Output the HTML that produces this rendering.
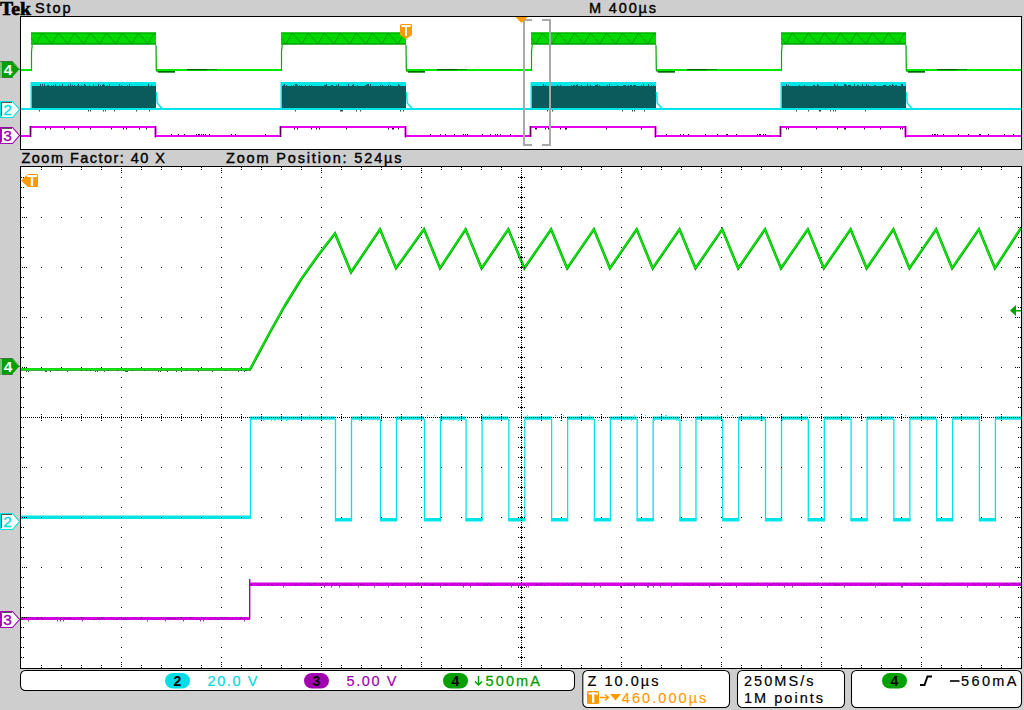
<!DOCTYPE html>
<html><head><meta charset="utf-8"><style>
html,body{margin:0;padding:0;background:#cecece;overflow:hidden;}
svg{display:block;}
</style></head><body>
<svg width="1024" height="710" viewBox="0 0 1024 710">
<rect x="0" y="0" width="1024" height="710" fill="#cecece"/>
<text x="0" y="14.6" font-family='"Liberation Serif", serif' font-size="19" font-weight="bold" fill="#000" stroke="#000" stroke-width="0.6" textLength="31" lengthAdjust="spacingAndGlyphs" >Tek</text>
<text x="35" y="12.8" font-family='"Liberation Sans", sans-serif' font-size="14.5" font-weight="normal" fill="#000" stroke="#000" stroke-width="0.4" textLength="35.5" lengthAdjust="spacing" >Stop</text>
<text x="589" y="12.8" font-family='"Liberation Sans", sans-serif' font-size="14.5" font-weight="normal" fill="#000" stroke="#000" stroke-width="0.4" textLength="67" lengthAdjust="spacing" >M 400µs</text>
<rect x="20" y="16" width="1002" height="134" fill="#000"/>
<rect x="21" y="17" width="1000" height="132" fill="#fff"/>
<rect x="21" y="69" width="10" height="2" fill="#00e800"/>
<rect x="156" y="69" width="125" height="2" fill="#00e800"/>
<rect x="406" y="69" width="125" height="2" fill="#00e800"/>
<rect x="656" y="69" width="125" height="2" fill="#00e800"/>
<rect x="906" y="69" width="115" height="2" fill="#00e800"/>
<rect x="21" y="108" width="1000" height="2" fill="#00e6e6"/>
<rect x="31" y="32.5" width="125" height="12" fill="#00d800"/>
<clipPath id="gc0"><rect x="31" y="32.5" width="125" height="12"/></clipPath>
<path d="M20.0,44 L26.3,33 L36.0,44 L42.3,33 L52.0,44 L58.3,33 L68.0,44 L74.3,33 L84.0,44 L90.3,33 L100.0,44 L106.3,33 L116.0,44 L122.3,33 L132.0,44 L138.3,33 L148.0,44 L154.3,33 L164.0,44 L170.3,33" stroke="#009a00" stroke-width="0.9" fill="none" clip-path="url(#gc0)"/>
<rect x="31" y="32.5" width="125" height="1" fill="#00a000"/>
<rect x="31" y="43.5" width="125" height="1" fill="#008800"/>
<path d="M31.5,71 L31.5,52 L32.2,45" stroke="#00b000" stroke-width="1.2" fill="none"/>
<path d="M156,45 L156.3,70 L157.5,72" stroke="#00a000" stroke-width="1.2" fill="none"/>
<rect x="158" y="71" width="17" height="1.7" fill="#006a00"/>
<rect x="187" y="69" width="20" height="1.2" fill="#005f00"/>
<rect x="207" y="69" width="10" height="1" fill="#009000"/>
<rect x="30.5" y="82" width="125.5" height="28" fill="#00e6e6"/>
<rect x="32" y="86" width="124" height="22" fill="#0a5c5c"/>
<rect x="72" y="85" width="1" height="1" fill="#0a5c5c"/>
<rect x="81" y="85" width="1" height="1" fill="#0a5c5c"/>
<rect x="42" y="84" width="1" height="2" fill="#0a5c5c"/>
<rect x="44" y="84" width="1" height="2" fill="#0a5c5c"/>
<rect x="40" y="84" width="1" height="2" fill="#0a5c5c"/>
<rect x="59" y="85" width="1" height="1" fill="#0a5c5c"/>
<rect x="85" y="85" width="1" height="1" fill="#0a5c5c"/>
<rect x="62" y="84" width="1" height="2" fill="#0a5c5c"/>
<rect x="84" y="84" width="1" height="2" fill="#0a5c5c"/>
<rect x="48" y="85" width="1" height="1" fill="#0a5c5c"/>
<rect x="109" y="84" width="1" height="2" fill="#0a5c5c"/>
<rect x="148" y="84" width="1" height="2" fill="#0a5c5c"/>
<rect x="104" y="85" width="1" height="1" fill="#0a5c5c"/>
<rect x="151" y="85" width="1" height="1" fill="#0a5c5c"/>
<rect x="100" y="85" width="1" height="1" fill="#0a5c5c"/>
<rect x="68" y="85" width="1" height="1" fill="#0a5c5c"/>
<rect x="98" y="84" width="1" height="2" fill="#0a5c5c"/>
<rect x="70" y="84" width="1" height="2" fill="#0a5c5c"/>
<rect x="55" y="84" width="1" height="2" fill="#0a5c5c"/>
<rect x="102" y="85" width="1" height="1" fill="#0a5c5c"/>
<rect x="78" y="84" width="1" height="2" fill="#0a5c5c"/>
<rect x="119" y="84" width="1" height="2" fill="#0a5c5c"/>
<rect x="40" y="85" width="1" height="1" fill="#0a5c5c"/>
<rect x="93" y="84" width="1" height="2" fill="#0a5c5c"/>
<rect x="85" y="85" width="1" height="1" fill="#0a5c5c"/>
<rect x="89" y="85" width="1" height="1" fill="#0a5c5c"/>
<rect x="77" y="85" width="1" height="1" fill="#0a5c5c"/>
<rect x="129" y="84" width="1" height="2" fill="#0a5c5c"/>
<rect x="127" y="85" width="1" height="1" fill="#0a5c5c"/>
<rect x="103" y="84" width="1" height="2" fill="#0a5c5c"/>
<rect x="93" y="85" width="1" height="1" fill="#0a5c5c"/>
<rect x="121" y="85" width="1" height="1" fill="#0a5c5c"/>
<rect x="107" y="85" width="1" height="1" fill="#0a5c5c"/>
<rect x="47" y="85" width="1" height="1" fill="#0a5c5c"/>
<rect x="53" y="85" width="1" height="1" fill="#0a5c5c"/>
<rect x="51" y="85" width="1" height="1" fill="#0a5c5c"/>
<rect x="84" y="84" width="1" height="2" fill="#0a5c5c"/>
<rect x="42" y="84" width="1" height="2" fill="#0a5c5c"/>
<rect x="102" y="85" width="1" height="1" fill="#0a5c5c"/>
<rect x="74" y="85" width="1" height="1" fill="#0a5c5c"/>
<path d="M156.5,92 L157.2,103 L162.5,109" stroke="#00e6e6" stroke-width="1.5" fill="none"/>
<rect x="105" y="110" width="1" height="1.5" fill="#225555"/>
<rect x="103" y="110" width="1" height="1.5" fill="#225555"/>
<rect x="88" y="110" width="1" height="1.5" fill="#225555"/>
<rect x="136" y="110" width="1" height="1.5" fill="#225555"/>
<rect x="149" y="110" width="1" height="1.5" fill="#225555"/>
<rect x="90" y="110" width="1" height="1.5" fill="#225555"/>
<rect x="114" y="110" width="1" height="1.5" fill="#225555"/>
<rect x="39" y="110" width="1" height="1.5" fill="#225555"/>
<rect x="281" y="32.5" width="125" height="12" fill="#00d800"/>
<clipPath id="gc1"><rect x="281" y="32.5" width="125" height="12"/></clipPath>
<path d="M270.0,44 L276.3,33 L286.0,44 L292.3,33 L302.0,44 L308.3,33 L318.0,44 L324.3,33 L334.0,44 L340.3,33 L350.0,44 L356.3,33 L366.0,44 L372.3,33 L382.0,44 L388.3,33 L398.0,44 L404.3,33 L414.0,44 L420.3,33" stroke="#009a00" stroke-width="0.9" fill="none" clip-path="url(#gc1)"/>
<rect x="281" y="32.5" width="125" height="1" fill="#00a000"/>
<rect x="281" y="43.5" width="125" height="1" fill="#008800"/>
<path d="M281.5,71 L281.5,52 L282.2,45" stroke="#00b000" stroke-width="1.2" fill="none"/>
<path d="M406,45 L406.3,70 L407.5,72" stroke="#00a000" stroke-width="1.2" fill="none"/>
<rect x="408" y="71" width="17" height="1.7" fill="#006a00"/>
<rect x="437" y="69" width="20" height="1.2" fill="#005f00"/>
<rect x="457" y="69" width="10" height="1" fill="#009000"/>
<rect x="280.5" y="82" width="125.5" height="28" fill="#00e6e6"/>
<rect x="282" y="86" width="124" height="22" fill="#0a5c5c"/>
<rect x="368" y="84" width="1" height="2" fill="#0a5c5c"/>
<rect x="353" y="84" width="1" height="2" fill="#0a5c5c"/>
<rect x="382" y="85" width="1" height="1" fill="#0a5c5c"/>
<rect x="370" y="84" width="1" height="2" fill="#0a5c5c"/>
<rect x="325" y="85" width="1" height="1" fill="#0a5c5c"/>
<rect x="326" y="84" width="1" height="2" fill="#0a5c5c"/>
<rect x="297" y="85" width="1" height="1" fill="#0a5c5c"/>
<rect x="309" y="85" width="1" height="1" fill="#0a5c5c"/>
<rect x="299" y="85" width="1" height="1" fill="#0a5c5c"/>
<rect x="331" y="85" width="1" height="1" fill="#0a5c5c"/>
<rect x="293" y="85" width="1" height="1" fill="#0a5c5c"/>
<rect x="332" y="85" width="1" height="1" fill="#0a5c5c"/>
<rect x="390" y="85" width="1" height="1" fill="#0a5c5c"/>
<rect x="388" y="85" width="1" height="1" fill="#0a5c5c"/>
<rect x="368" y="85" width="1" height="1" fill="#0a5c5c"/>
<rect x="366" y="85" width="1" height="1" fill="#0a5c5c"/>
<rect x="399" y="85" width="1" height="1" fill="#0a5c5c"/>
<rect x="293" y="85" width="1" height="1" fill="#0a5c5c"/>
<rect x="311" y="85" width="1" height="1" fill="#0a5c5c"/>
<rect x="284" y="84" width="1" height="2" fill="#0a5c5c"/>
<rect x="305" y="85" width="1" height="1" fill="#0a5c5c"/>
<rect x="283" y="85" width="1" height="1" fill="#0a5c5c"/>
<rect x="348" y="84" width="1" height="2" fill="#0a5c5c"/>
<rect x="352" y="85" width="1" height="1" fill="#0a5c5c"/>
<rect x="367" y="84" width="1" height="2" fill="#0a5c5c"/>
<rect x="398" y="84" width="1" height="2" fill="#0a5c5c"/>
<rect x="365" y="85" width="1" height="1" fill="#0a5c5c"/>
<rect x="338" y="84" width="1" height="2" fill="#0a5c5c"/>
<rect x="380" y="85" width="1" height="1" fill="#0a5c5c"/>
<rect x="331" y="85" width="1" height="1" fill="#0a5c5c"/>
<rect x="296" y="84" width="1" height="2" fill="#0a5c5c"/>
<rect x="331" y="85" width="1" height="1" fill="#0a5c5c"/>
<rect x="291" y="85" width="1" height="1" fill="#0a5c5c"/>
<rect x="336" y="85" width="1" height="1" fill="#0a5c5c"/>
<rect x="324" y="85" width="1" height="1" fill="#0a5c5c"/>
<rect x="295" y="84" width="1" height="2" fill="#0a5c5c"/>
<rect x="301" y="85" width="1" height="1" fill="#0a5c5c"/>
<rect x="398" y="84" width="1" height="2" fill="#0a5c5c"/>
<rect x="286" y="85" width="1" height="1" fill="#0a5c5c"/>
<rect x="357" y="85" width="1" height="1" fill="#0a5c5c"/>
<path d="M406.5,92 L407.2,103 L412.5,109" stroke="#00e6e6" stroke-width="1.5" fill="none"/>
<rect x="360" y="110" width="1" height="1.5" fill="#225555"/>
<rect x="400" y="110" width="1" height="1.5" fill="#225555"/>
<rect x="356" y="110" width="1" height="1.5" fill="#225555"/>
<rect x="340" y="110" width="1" height="1.5" fill="#225555"/>
<rect x="295" y="110" width="1" height="1.5" fill="#225555"/>
<rect x="342" y="110" width="1" height="1.5" fill="#225555"/>
<rect x="403" y="110" width="1" height="1.5" fill="#225555"/>
<rect x="341" y="110" width="1" height="1.5" fill="#225555"/>
<rect x="531" y="32.5" width="125" height="12" fill="#00d800"/>
<clipPath id="gc2"><rect x="531" y="32.5" width="125" height="12"/></clipPath>
<path d="M520.0,44 L526.3,33 L536.0,44 L542.3,33 L552.0,44 L558.3,33 L568.0,44 L574.3,33 L584.0,44 L590.3,33 L600.0,44 L606.3,33 L616.0,44 L622.3,33 L632.0,44 L638.3,33 L648.0,44 L654.3,33 L664.0,44 L670.3,33" stroke="#009a00" stroke-width="0.9" fill="none" clip-path="url(#gc2)"/>
<rect x="531" y="32.5" width="125" height="1" fill="#00a000"/>
<rect x="531" y="43.5" width="125" height="1" fill="#008800"/>
<path d="M531.5,71 L531.5,52 L532.2,45" stroke="#00b000" stroke-width="1.2" fill="none"/>
<path d="M656,45 L656.3,70 L657.5,72" stroke="#00a000" stroke-width="1.2" fill="none"/>
<rect x="658" y="71" width="17" height="1.7" fill="#006a00"/>
<rect x="687" y="69" width="20" height="1.2" fill="#005f00"/>
<rect x="707" y="69" width="10" height="1" fill="#009000"/>
<rect x="530.5" y="82" width="125.5" height="28" fill="#00e6e6"/>
<rect x="532" y="86" width="124" height="22" fill="#0a5c5c"/>
<rect x="571" y="85" width="1" height="1" fill="#0a5c5c"/>
<rect x="545" y="85" width="1" height="1" fill="#0a5c5c"/>
<rect x="623" y="85" width="1" height="1" fill="#0a5c5c"/>
<rect x="633" y="85" width="1" height="1" fill="#0a5c5c"/>
<rect x="595" y="85" width="1" height="1" fill="#0a5c5c"/>
<rect x="648" y="84" width="1" height="2" fill="#0a5c5c"/>
<rect x="577" y="84" width="1" height="2" fill="#0a5c5c"/>
<rect x="599" y="85" width="1" height="1" fill="#0a5c5c"/>
<rect x="625" y="85" width="1" height="1" fill="#0a5c5c"/>
<rect x="651" y="85" width="1" height="1" fill="#0a5c5c"/>
<rect x="617" y="85" width="1" height="1" fill="#0a5c5c"/>
<rect x="596" y="85" width="1" height="1" fill="#0a5c5c"/>
<rect x="576" y="85" width="1" height="1" fill="#0a5c5c"/>
<rect x="597" y="84" width="1" height="2" fill="#0a5c5c"/>
<rect x="573" y="85" width="1" height="1" fill="#0a5c5c"/>
<rect x="607" y="85" width="1" height="1" fill="#0a5c5c"/>
<rect x="631" y="85" width="1" height="1" fill="#0a5c5c"/>
<rect x="623" y="85" width="1" height="1" fill="#0a5c5c"/>
<rect x="557" y="85" width="1" height="1" fill="#0a5c5c"/>
<rect x="576" y="85" width="1" height="1" fill="#0a5c5c"/>
<rect x="653" y="85" width="1" height="1" fill="#0a5c5c"/>
<rect x="590" y="85" width="1" height="1" fill="#0a5c5c"/>
<rect x="617" y="85" width="1" height="1" fill="#0a5c5c"/>
<rect x="587" y="84" width="1" height="2" fill="#0a5c5c"/>
<rect x="653" y="85" width="1" height="1" fill="#0a5c5c"/>
<rect x="543" y="85" width="1" height="1" fill="#0a5c5c"/>
<rect x="560" y="85" width="1" height="1" fill="#0a5c5c"/>
<rect x="574" y="85" width="1" height="1" fill="#0a5c5c"/>
<rect x="609" y="84" width="1" height="2" fill="#0a5c5c"/>
<rect x="635" y="85" width="1" height="1" fill="#0a5c5c"/>
<rect x="643" y="85" width="1" height="1" fill="#0a5c5c"/>
<rect x="630" y="85" width="1" height="1" fill="#0a5c5c"/>
<rect x="634" y="85" width="1" height="1" fill="#0a5c5c"/>
<rect x="643" y="84" width="1" height="2" fill="#0a5c5c"/>
<rect x="624" y="85" width="1" height="1" fill="#0a5c5c"/>
<rect x="641" y="85" width="1" height="1" fill="#0a5c5c"/>
<rect x="628" y="85" width="1" height="1" fill="#0a5c5c"/>
<rect x="543" y="84" width="1" height="2" fill="#0a5c5c"/>
<rect x="581" y="85" width="1" height="1" fill="#0a5c5c"/>
<rect x="623" y="85" width="1" height="1" fill="#0a5c5c"/>
<path d="M656.5,92 L657.2,103 L662.5,109" stroke="#00e6e6" stroke-width="1.5" fill="none"/>
<rect x="622" y="110" width="1" height="1.5" fill="#225555"/>
<rect x="552" y="110" width="1" height="1.5" fill="#225555"/>
<rect x="547" y="110" width="1" height="1.5" fill="#225555"/>
<rect x="550" y="110" width="1" height="1.5" fill="#225555"/>
<rect x="644" y="110" width="1" height="1.5" fill="#225555"/>
<rect x="632" y="110" width="1" height="1.5" fill="#225555"/>
<rect x="549" y="110" width="1" height="1.5" fill="#225555"/>
<rect x="634" y="110" width="1" height="1.5" fill="#225555"/>
<rect x="781" y="32.5" width="125" height="12" fill="#00d800"/>
<clipPath id="gc3"><rect x="781" y="32.5" width="125" height="12"/></clipPath>
<path d="M770.0,44 L776.3,33 L786.0,44 L792.3,33 L802.0,44 L808.3,33 L818.0,44 L824.3,33 L834.0,44 L840.3,33 L850.0,44 L856.3,33 L866.0,44 L872.3,33 L882.0,44 L888.3,33 L898.0,44 L904.3,33 L914.0,44 L920.3,33" stroke="#009a00" stroke-width="0.9" fill="none" clip-path="url(#gc3)"/>
<rect x="781" y="32.5" width="125" height="1" fill="#00a000"/>
<rect x="781" y="43.5" width="125" height="1" fill="#008800"/>
<path d="M781.5,71 L781.5,52 L782.2,45" stroke="#00b000" stroke-width="1.2" fill="none"/>
<path d="M906,45 L906.3,70 L907.5,72" stroke="#00a000" stroke-width="1.2" fill="none"/>
<rect x="908" y="71" width="17" height="1.7" fill="#006a00"/>
<rect x="937" y="69" width="20" height="1.2" fill="#005f00"/>
<rect x="957" y="69" width="10" height="1" fill="#009000"/>
<rect x="780.5" y="82" width="125.5" height="28" fill="#00e6e6"/>
<rect x="782" y="86" width="124" height="22" fill="#0a5c5c"/>
<rect x="902" y="84" width="1" height="2" fill="#0a5c5c"/>
<rect x="896" y="85" width="1" height="1" fill="#0a5c5c"/>
<rect x="849" y="85" width="1" height="1" fill="#0a5c5c"/>
<rect x="786" y="84" width="1" height="2" fill="#0a5c5c"/>
<rect x="862" y="84" width="1" height="2" fill="#0a5c5c"/>
<rect x="874" y="85" width="1" height="1" fill="#0a5c5c"/>
<rect x="835" y="85" width="1" height="1" fill="#0a5c5c"/>
<rect x="883" y="85" width="1" height="1" fill="#0a5c5c"/>
<rect x="786" y="85" width="1" height="1" fill="#0a5c5c"/>
<rect x="818" y="85" width="1" height="1" fill="#0a5c5c"/>
<rect x="875" y="85" width="1" height="1" fill="#0a5c5c"/>
<rect x="814" y="85" width="1" height="1" fill="#0a5c5c"/>
<rect x="884" y="85" width="1" height="1" fill="#0a5c5c"/>
<rect x="893" y="85" width="1" height="1" fill="#0a5c5c"/>
<rect x="892" y="84" width="1" height="2" fill="#0a5c5c"/>
<rect x="854" y="84" width="1" height="2" fill="#0a5c5c"/>
<rect x="834" y="84" width="1" height="2" fill="#0a5c5c"/>
<rect x="799" y="85" width="1" height="1" fill="#0a5c5c"/>
<rect x="846" y="85" width="1" height="1" fill="#0a5c5c"/>
<rect x="889" y="85" width="1" height="1" fill="#0a5c5c"/>
<rect x="857" y="85" width="1" height="1" fill="#0a5c5c"/>
<rect x="804" y="85" width="1" height="1" fill="#0a5c5c"/>
<rect x="858" y="85" width="1" height="1" fill="#0a5c5c"/>
<rect x="850" y="85" width="1" height="1" fill="#0a5c5c"/>
<rect x="866" y="84" width="1" height="2" fill="#0a5c5c"/>
<rect x="850" y="85" width="1" height="1" fill="#0a5c5c"/>
<rect x="890" y="85" width="1" height="1" fill="#0a5c5c"/>
<rect x="813" y="85" width="1" height="1" fill="#0a5c5c"/>
<rect x="788" y="85" width="1" height="1" fill="#0a5c5c"/>
<rect x="844" y="84" width="1" height="2" fill="#0a5c5c"/>
<rect x="786" y="85" width="1" height="1" fill="#0a5c5c"/>
<rect x="837" y="84" width="1" height="2" fill="#0a5c5c"/>
<rect x="901" y="84" width="1" height="2" fill="#0a5c5c"/>
<rect x="845" y="84" width="1" height="2" fill="#0a5c5c"/>
<rect x="817" y="84" width="1" height="2" fill="#0a5c5c"/>
<rect x="848" y="85" width="1" height="1" fill="#0a5c5c"/>
<rect x="844" y="85" width="1" height="1" fill="#0a5c5c"/>
<rect x="868" y="85" width="1" height="1" fill="#0a5c5c"/>
<rect x="895" y="85" width="1" height="1" fill="#0a5c5c"/>
<rect x="885" y="85" width="1" height="1" fill="#0a5c5c"/>
<path d="M906.5,92 L907.2,103 L912.5,109" stroke="#00e6e6" stroke-width="1.5" fill="none"/>
<rect x="833" y="110" width="1" height="1.5" fill="#225555"/>
<rect x="830" y="110" width="1" height="1.5" fill="#225555"/>
<rect x="820" y="110" width="1" height="1.5" fill="#225555"/>
<rect x="865" y="110" width="1" height="1.5" fill="#225555"/>
<rect x="835" y="110" width="1" height="1.5" fill="#225555"/>
<rect x="808" y="110" width="1" height="1.5" fill="#225555"/>
<rect x="819" y="110" width="1" height="1.5" fill="#225555"/>
<rect x="796" y="110" width="1" height="1.5" fill="#225555"/>
<path d="M21,136 L30.5,136 L30.5,127 L155.5,127 L155.5,136 L280.5,136 L280.5,127 L405.5,127 L405.5,136 L530.5,136 L530.5,127 L655.5,127 L655.5,136 L780.5,136 L780.5,127 L905.5,127 L905.5,136 L1021,136" stroke="#e600f0" stroke-width="2" fill="none"/>
<path d="M30.5,137 L30.5,126 M155.5,126 L155.5,137.5" stroke="#5a005a" stroke-width="1" fill="none"/>
<rect x="126" y="128" width="1" height="1.5" fill="#500050"/>
<rect x="146" y="128" width="1" height="1.5" fill="#500050"/>
<rect x="111" y="128" width="1" height="1.5" fill="#500050"/>
<rect x="78" y="128" width="1" height="1.5" fill="#500050"/>
<rect x="64" y="128" width="1" height="1.5" fill="#500050"/>
<rect x="50" y="128" width="1" height="1.5" fill="#500050"/>
<rect x="90" y="128" width="1" height="1.5" fill="#500050"/>
<rect x="123" y="128" width="1" height="1.5" fill="#500050"/>
<rect x="45" y="128" width="1" height="1.5" fill="#500050"/>
<rect x="139" y="128" width="1" height="1.5" fill="#500050"/>
<rect x="178" y="134" width="1" height="1.2" fill="#500050"/>
<rect x="231" y="134" width="1" height="1.2" fill="#500050"/>
<rect x="184" y="134" width="1" height="1.2" fill="#500050"/>
<rect x="235" y="134" width="1" height="1.2" fill="#500050"/>
<rect x="265" y="134" width="1" height="1.2" fill="#500050"/>
<rect x="203" y="134" width="1" height="1.2" fill="#500050"/>
<rect x="205" y="134" width="1" height="1.2" fill="#500050"/>
<rect x="198" y="134" width="1" height="1.2" fill="#500050"/>
<rect x="171" y="134" width="1" height="1.2" fill="#500050"/>
<rect x="199" y="134" width="1" height="1.2" fill="#500050"/>
<rect x="196" y="134" width="1" height="1.2" fill="#500050"/>
<rect x="209" y="134" width="1" height="1.2" fill="#500050"/>
<rect x="235" y="134" width="1" height="1.2" fill="#500050"/>
<rect x="201" y="134" width="1" height="1.2" fill="#500050"/>
<path d="M280.5,137 L280.5,126 M405.5,126 L405.5,137.5" stroke="#5a005a" stroke-width="1" fill="none"/>
<rect x="346" y="128" width="1" height="1.5" fill="#500050"/>
<rect x="319" y="128" width="1" height="1.5" fill="#500050"/>
<rect x="398" y="128" width="1" height="1.5" fill="#500050"/>
<rect x="297" y="128" width="1" height="1.5" fill="#500050"/>
<rect x="393" y="128" width="1" height="1.5" fill="#500050"/>
<rect x="311" y="128" width="1" height="1.5" fill="#500050"/>
<rect x="388" y="128" width="1" height="1.5" fill="#500050"/>
<rect x="294" y="128" width="1" height="1.5" fill="#500050"/>
<rect x="316" y="128" width="1" height="1.5" fill="#500050"/>
<rect x="392" y="128" width="1" height="1.5" fill="#500050"/>
<rect x="430" y="134" width="1" height="1.2" fill="#500050"/>
<rect x="490" y="134" width="1" height="1.2" fill="#500050"/>
<rect x="497" y="134" width="1" height="1.2" fill="#500050"/>
<rect x="500" y="134" width="1" height="1.2" fill="#500050"/>
<rect x="482" y="134" width="1" height="1.2" fill="#500050"/>
<rect x="510" y="134" width="1" height="1.2" fill="#500050"/>
<rect x="454" y="134" width="1" height="1.2" fill="#500050"/>
<rect x="467" y="134" width="1" height="1.2" fill="#500050"/>
<rect x="465" y="134" width="1" height="1.2" fill="#500050"/>
<rect x="463" y="134" width="1" height="1.2" fill="#500050"/>
<rect x="445" y="134" width="1" height="1.2" fill="#500050"/>
<rect x="440" y="134" width="1" height="1.2" fill="#500050"/>
<rect x="495" y="134" width="1" height="1.2" fill="#500050"/>
<rect x="430" y="134" width="1" height="1.2" fill="#500050"/>
<path d="M530.5,137 L530.5,126 M655.5,126 L655.5,137.5" stroke="#5a005a" stroke-width="1" fill="none"/>
<rect x="641" y="128" width="1" height="1.5" fill="#500050"/>
<rect x="566" y="128" width="1" height="1.5" fill="#500050"/>
<rect x="536" y="128" width="1" height="1.5" fill="#500050"/>
<rect x="545" y="128" width="1" height="1.5" fill="#500050"/>
<rect x="565" y="128" width="1" height="1.5" fill="#500050"/>
<rect x="606" y="128" width="1" height="1.5" fill="#500050"/>
<rect x="560" y="128" width="1" height="1.5" fill="#500050"/>
<rect x="565" y="128" width="1" height="1.5" fill="#500050"/>
<rect x="548" y="128" width="1" height="1.5" fill="#500050"/>
<rect x="535" y="128" width="1" height="1.5" fill="#500050"/>
<rect x="765" y="134" width="1" height="1.2" fill="#500050"/>
<rect x="705" y="134" width="1" height="1.2" fill="#500050"/>
<rect x="757" y="134" width="1" height="1.2" fill="#500050"/>
<rect x="726" y="134" width="1" height="1.2" fill="#500050"/>
<rect x="666" y="134" width="1" height="1.2" fill="#500050"/>
<rect x="736" y="134" width="1" height="1.2" fill="#500050"/>
<rect x="760" y="134" width="1" height="1.2" fill="#500050"/>
<rect x="763" y="134" width="1" height="1.2" fill="#500050"/>
<rect x="688" y="134" width="1" height="1.2" fill="#500050"/>
<rect x="680" y="134" width="1" height="1.2" fill="#500050"/>
<rect x="759" y="134" width="1" height="1.2" fill="#500050"/>
<rect x="727" y="134" width="1" height="1.2" fill="#500050"/>
<rect x="717" y="134" width="1" height="1.2" fill="#500050"/>
<rect x="683" y="134" width="1" height="1.2" fill="#500050"/>
<path d="M780.5,137 L780.5,126 M905.5,126 L905.5,137.5" stroke="#5a005a" stroke-width="1" fill="none"/>
<rect x="837" y="128" width="1" height="1.5" fill="#500050"/>
<rect x="864" y="128" width="1" height="1.5" fill="#500050"/>
<rect x="816" y="128" width="1" height="1.5" fill="#500050"/>
<rect x="880" y="128" width="1" height="1.5" fill="#500050"/>
<rect x="902" y="128" width="1" height="1.5" fill="#500050"/>
<rect x="788" y="128" width="1" height="1.5" fill="#500050"/>
<rect x="786" y="128" width="1" height="1.5" fill="#500050"/>
<rect x="844" y="128" width="1" height="1.5" fill="#500050"/>
<rect x="900" y="128" width="1" height="1.5" fill="#500050"/>
<rect x="845" y="128" width="1" height="1.5" fill="#500050"/>
<rect x="937" y="134" width="1" height="1.2" fill="#500050"/>
<rect x="958" y="134" width="1" height="1.2" fill="#500050"/>
<rect x="980" y="134" width="1" height="1.2" fill="#500050"/>
<rect x="979" y="134" width="1" height="1.2" fill="#500050"/>
<rect x="980" y="134" width="1" height="1.2" fill="#500050"/>
<rect x="968" y="134" width="1" height="1.2" fill="#500050"/>
<rect x="1004" y="134" width="1" height="1.2" fill="#500050"/>
<rect x="1013" y="134" width="1" height="1.2" fill="#500050"/>
<rect x="943" y="134" width="1" height="1.2" fill="#500050"/>
<rect x="934" y="134" width="1" height="1.2" fill="#500050"/>
<rect x="935" y="134" width="1" height="1.2" fill="#500050"/>
<rect x="932" y="134" width="1" height="1.2" fill="#500050"/>
<rect x="1004" y="134" width="1" height="1.2" fill="#500050"/>
<rect x="988" y="134" width="1" height="1.2" fill="#500050"/>
<path d="M532,20 L524,20 L524,145 L532,145 M542,20 L550,20 L550,145 L542,145" stroke="#a9a9a9" stroke-width="2" fill="none"/>
<polygon points="515.5,17 527.5,17 521.5,23" fill="#ff9900"/>
<path d="M400,25 L401,24 L411,24 L412,25 L412,35 L406,39 L400,35 Z" fill="#ff9900"/>
<rect x="401.5" y="25" width="9" height="2" fill="#fff"/>
<rect x="405" y="25" width="2" height="11" fill="#fff"/>
<polygon points="0.5,61.5 12.5,61.5 19.5,69.5 12.5,77.5 0.5,77.5" fill="#00a000" stroke="#3a7a3a" stroke-width="1"/>
<rect x="0" y="62" width="2" height="16" fill="#7cc47c"/>
<path d="M13,77 L19.3,70" stroke="#ffffff" stroke-width="0.8" fill="none"/>
<path d="M13.2,62.5 L18.5,68.5" stroke="#7fd07f" stroke-width="0.8" fill="none"/>
<text x="8" y="74.5" text-anchor="middle" font-family='"Liberation Sans", sans-serif' font-size="15.5" font-weight="bold" fill="#fff">4</text>
<polygon points="0.5,101.5 12.5,101.5 19.5,109.5 12.5,117.5 0.5,117.5" fill="#fff" stroke="#00dede" stroke-width="1.1"/>
<path d="M1.5,116 L1.5,102.5 L12,102.5" stroke="#404040" stroke-width="0.9" fill="none"/>
<text x="7.5" y="114.5" text-anchor="middle" font-family='"Liberation Sans", sans-serif' font-size="15.5" fill="#00dede" stroke="#00dede" stroke-width="0.35">2</text>
<polygon points="0.5,127.5 12.5,127.5 19.5,135.5 12.5,143.5 0.5,143.5" fill="#fff" stroke="#a000b0" stroke-width="1.1"/>
<path d="M1.5,142 L1.5,128.5 L12,128.5" stroke="#404040" stroke-width="0.9" fill="none"/>
<text x="7.5" y="140.5" text-anchor="middle" font-family='"Liberation Sans", sans-serif' font-size="15.5" fill="#a000b0" stroke="#a000b0" stroke-width="0.35">3</text>
<text x="21.5" y="162.6" font-family='"Liberation Sans", sans-serif' font-size="14.5" font-weight="normal" fill="#000" stroke="#000" stroke-width="0.4" textLength="143.5" lengthAdjust="spacing" >Zoom Factor: 40 X</text>
<text x="226" y="162.6" font-family='"Liberation Sans", sans-serif' font-size="14.5" font-weight="normal" fill="#000" stroke="#000" stroke-width="0.4" textLength="175.5" lengthAdjust="spacing" >Zoom Position: 524µs</text>
<rect x="20" y="166" width="1002" height="503" fill="#000"/>
<rect x="21" y="167" width="1000" height="501" fill="#fff"/>
<clipPath id="mc"><rect x="21" y="167" width="1000" height="501"/></clipPath>
<g clip-path="url(#mc)">
<path d="M21.0,369.5 L250.0,369.5 L260.0,350.8 L269.3,333.5 L285.0,305.5 L301.0,279.5 L318.0,255.5 L335.0,233.5 L351.0,272.3 L380.0,229.3 L396.0,268.3 L424.0,229.3 L440.0,268.3 L465.6,229.3 L481.6,268.3 L508.3,229.3 L524.3,268.3 L551.1,229.3 L567.1,268.3 L593.9,229.3 L609.9,268.3 L636.7,229.3 L652.7,268.3 L679.5,229.3 L695.5,268.3 L722.2,229.3 L738.2,268.3 L765.0,229.3 L781.0,268.3 L807.8,229.3 L823.8,268.3 L850.6,229.3 L866.6,268.3 L893.4,229.3 L909.4,268.3 L936.1,229.3 L952.1,268.3 L978.9,229.3 L994.9,268.3 L1021.0,228.0" stroke="#009000" stroke-width="2.5" fill="none" stroke-linejoin="miter"/>
<path d="M21.0,369.5 L250.0,369.5 L260.0,350.8 L269.3,333.5 L285.0,305.5 L301.0,279.5 L318.0,255.5 L335.0,233.5 L351.0,272.3 L380.0,229.3 L396.0,268.3 L424.0,229.3 L440.0,268.3 L465.6,229.3 L481.6,268.3 L508.3,229.3 L524.3,268.3 L551.1,229.3 L567.1,268.3 L593.9,229.3 L609.9,268.3 L636.7,229.3 L652.7,268.3 L679.5,229.3 L695.5,268.3 L722.2,229.3 L738.2,268.3 L765.0,229.3 L781.0,268.3 L807.8,229.3 L823.8,268.3 L850.6,229.3 L866.6,268.3 L893.4,229.3 L909.4,268.3 L936.1,229.3 L952.1,268.3 L978.9,229.3 L994.9,268.3 L1021.0,228.0" stroke="#00f000" stroke-width="1.5" fill="none" stroke-linejoin="miter" transform="translate(-0.2,-0.2)"/>
<rect x="21" y="515.5" width="229.5" height="3.5" fill="#00e4e6"/>
<rect x="250" y="416.5" width="85" height="3.2" fill="#00e4e6"/>
<rect x="335" y="518" width="17" height="3.5" fill="#00e4e6"/>
<rect x="351" y="416.5" width="29" height="3.2" fill="#00e4e6"/>
<rect x="380" y="518" width="17" height="3.5" fill="#00e4e6"/>
<rect x="396" y="416.5" width="28" height="3.2" fill="#00e4e6"/>
<rect x="424" y="518" width="17" height="3.5" fill="#00e4e6"/>
<rect x="440" y="416.5" width="25.560000000000002" height="3.2" fill="#00e4e6"/>
<rect x="465.56" y="518" width="17.0" height="3.5" fill="#00e4e6"/>
<rect x="481.56" y="416.5" width="26.78000000000003" height="3.2" fill="#00e4e6"/>
<rect x="508.34000000000003" y="518" width="17.0" height="3.5" fill="#00e4e6"/>
<rect x="524.34" y="416.5" width="26.779999999999973" height="3.2" fill="#00e4e6"/>
<rect x="551.12" y="518" width="17.0" height="3.5" fill="#00e4e6"/>
<rect x="567.12" y="416.5" width="26.779999999999973" height="3.2" fill="#00e4e6"/>
<rect x="593.9" y="518" width="17.0" height="3.5" fill="#00e4e6"/>
<rect x="609.9" y="416.5" width="26.780000000000086" height="3.2" fill="#00e4e6"/>
<rect x="636.6800000000001" y="518" width="17.0" height="3.5" fill="#00e4e6"/>
<rect x="652.6800000000001" y="416.5" width="26.779999999999973" height="3.2" fill="#00e4e6"/>
<rect x="679.46" y="518" width="17.0" height="3.5" fill="#00e4e6"/>
<rect x="695.46" y="416.5" width="26.779999999999973" height="3.2" fill="#00e4e6"/>
<rect x="722.24" y="518" width="17.0" height="3.5" fill="#00e4e6"/>
<rect x="738.24" y="416.5" width="26.779999999999973" height="3.2" fill="#00e4e6"/>
<rect x="765.02" y="518" width="17.0" height="3.5" fill="#00e4e6"/>
<rect x="781.02" y="416.5" width="26.779999999999973" height="3.2" fill="#00e4e6"/>
<rect x="807.8" y="518" width="17.0" height="3.5" fill="#00e4e6"/>
<rect x="823.8" y="416.5" width="26.780000000000086" height="3.2" fill="#00e4e6"/>
<rect x="850.58" y="518" width="17.0" height="3.5" fill="#00e4e6"/>
<rect x="866.58" y="416.5" width="26.779999999999973" height="3.2" fill="#00e4e6"/>
<rect x="893.36" y="518" width="17.0" height="3.5" fill="#00e4e6"/>
<rect x="909.36" y="416.5" width="26.779999999999973" height="3.2" fill="#00e4e6"/>
<rect x="936.14" y="518" width="17.0" height="3.5" fill="#00e4e6"/>
<rect x="952.14" y="416.5" width="26.780000000000086" height="3.2" fill="#00e4e6"/>
<rect x="978.9200000000001" y="518" width="17.0" height="3.5" fill="#00e4e6"/>
<rect x="994.9200000000001" y="416.5" width="26.079999999999927" height="3.2" fill="#00e4e6"/>
<path d="M250.5,519 L250.5,417 M335.5,419 L335.5,521 M351.5,521 L351.5,419 M380.5,419 L380.5,521 M396.5,521 L396.5,419 M424.5,419 L424.5,521 M440.5,521 L440.5,419 M466.06,419 L466.06,521 M482.06,521 L482.06,419 M508.84000000000003,419 L508.84000000000003,521 M524.84,521 L524.84,419 M551.62,419 L551.62,521 M567.62,521 L567.62,419 M594.4,419 L594.4,521 M610.4,521 L610.4,419 M637.1800000000001,419 L637.1800000000001,521 M653.1800000000001,521 L653.1800000000001,419 M679.96,419 L679.96,521 M695.96,521 L695.96,419 M722.74,419 L722.74,521 M738.74,521 L738.74,419 M765.52,419 L765.52,521 M781.52,521 L781.52,419 M808.3,419 L808.3,521 M824.3,521 L824.3,419 M851.08,419 L851.08,521 M867.08,521 L867.08,419 M893.86,419 L893.86,521 M909.86,521 L909.86,419 M936.64,419 L936.64,521 M952.64,521 L952.64,419 M979.4200000000001,419 L979.4200000000001,521 M995.4200000000001,521 L995.4200000000001,419" stroke="#00e4e6" stroke-width="1.3" fill="none"/>
<path d="M26,371h1v1h-1zM28,371h1v1h-1zM45,371h1v1h-1zM46,371h1v1h-1zM50,371h1v1h-1zM57,370h1v1h-1zM67,371h1v1h-1zM81,370h1v1h-1zM86,370h1v1h-1zM90,370h1v1h-1zM95,371h1v1h-1zM97,371h1v1h-1zM104,371h1v1h-1zM108,370h1v1h-1zM117,370h1v1h-1zM123,370h1v1h-1zM125,371h1v1h-1zM126,371h1v1h-1zM127,371h1v1h-1zM132,370h1v1h-1zM144,370h1v1h-1zM158,371h1v1h-1zM160,371h1v1h-1zM166,370h1v1h-1zM167,371h1v1h-1zM176,371h1v1h-1zM181,371h1v1h-1zM186,370h1v1h-1zM197,370h1v1h-1zM198,371h1v1h-1zM212,371h1v1h-1zM225,370h1v1h-1zM238,371h1v1h-1zM241,370h1v1h-1zM244,371h1v1h-1zM245,370h1v1h-1zM246,370h1v1h-1z" fill="#007a00"/>
<path d="M263,420h1v1h-1zM271,420h1v1h-1zM274,420h1v1h-1zM286,420h1v1h-1zM309,415h1v1h-1zM359,420h1v1h-1zM377,420h1v1h-1zM390,420h1v1h-1zM427,415h1v1h-1zM432,420h1v1h-1zM434,415h1v1h-1zM453,420h1v1h-1zM458,420h1v1h-1zM482,415h1v1h-1zM489,415h1v1h-1zM509,420h1v1h-1zM521,415h1v1h-1zM527,415h1v1h-1zM541,420h1v1h-1zM555,415h1v1h-1zM560,420h1v1h-1zM563,415h1v1h-1zM589,415h1v1h-1zM598,420h1v1h-1zM631,420h1v1h-1zM634,415h1v1h-1zM645,415h1v1h-1zM654,420h1v1h-1zM661,415h1v1h-1zM665,415h1v1h-1zM666,415h1v1h-1zM676,420h1v1h-1zM678,420h1v1h-1zM686,420h1v1h-1zM691,420h1v1h-1zM717,415h1v1h-1zM727,415h1v1h-1zM732,415h1v1h-1zM750,415h1v1h-1zM760,420h1v1h-1zM762,420h1v1h-1zM770,415h1v1h-1zM779,415h1v1h-1zM782,420h1v1h-1zM809,415h1v1h-1zM821,420h1v1h-1zM862,420h1v1h-1zM905,415h1v1h-1zM927,420h1v1h-1z" fill="#00e4e6" opacity="0.8"/>
<rect x="21" y="617" width="229" height="3" fill="#d600e6"/>
<rect x="250" y="582.5" width="771" height="3.5" fill="#d600e6"/>
<path d="M22,619h1v1h-1zM23,618h1v1h-1zM27,619h1v1h-1zM28,620h1v1.5h-1zM29,619h1v1h-1zM30,617h1v1h-1zM32,619h1v1h-1zM33,617h1v1h-1zM36,618h1v1h-1zM37,617h1v1h-1zM38,618h1v1h-1zM42,618h1v1h-1zM43,619h1v1h-1zM47,617h1v1h-1zM56,617h1v1h-1zM57,619h1v1h-1zM57,620h1v1.5h-1zM59,619h1v1h-1zM60,618h1v1h-1zM60,620h1v1.5h-1zM61,619h1v1h-1zM63,620h1v1.5h-1zM64,618h1v1h-1zM66,618h1v1h-1zM68,618h1v1h-1zM69,618h1v1h-1zM70,617h1v1h-1zM71,619h1v1h-1zM74,619h1v1h-1zM78,617h1v1h-1zM82,617h1v1h-1zM82,620h1v1.5h-1zM84,618h1v1h-1zM87,619h1v1h-1zM93,619h1v1h-1zM94,619h1v1h-1zM96,619h1v1h-1zM97,617h1v1h-1zM98,618h1v1h-1zM99,618h1v1h-1zM102,618h1v1h-1zM103,617h1v1h-1zM104,619h1v1h-1zM111,617h1v1h-1zM113,617h1v1h-1zM116,619h1v1h-1zM117,619h1v1h-1zM119,617h1v1h-1zM123,618h1v1h-1zM124,619h1v1h-1zM125,618h1v1h-1zM126,619h1v1h-1zM127,617h1v1h-1zM133,617h1v1h-1zM135,617h1v1h-1zM138,619h1v1h-1zM140,618h1v1h-1zM145,617h1v1h-1zM147,620h1v1.5h-1zM151,618h1v1h-1zM153,619h1v1h-1zM165,620h1v1.5h-1zM166,618h1v1h-1zM167,617h1v1h-1zM168,617h1v1h-1zM169,618h1v1h-1zM170,617h1v1h-1zM172,618h1v1h-1zM173,618h1v1h-1zM175,619h1v1h-1zM177,618h1v1h-1zM178,617h1v1h-1zM180,617h1v1h-1zM181,617h1v1h-1zM183,620h1v1.5h-1zM185,617h1v1h-1zM189,617h1v1h-1zM190,617h1v1h-1zM191,617h1v1h-1zM193,617h1v1h-1zM196,619h1v1h-1zM199,619h1v1h-1zM200,620h1v1.5h-1zM203,618h1v1h-1zM203,620h1v1.5h-1zM207,618h1v1h-1zM209,619h1v1h-1zM211,617h1v1h-1zM214,617h1v1h-1zM215,617h1v1h-1zM217,619h1v1h-1zM218,619h1v1h-1zM221,617h1v1h-1zM222,618h1v1h-1zM224,617h1v1h-1zM225,617h1v1h-1zM227,617h1v1h-1zM232,618h1v1h-1zM236,617h1v1h-1zM240,618h1v1h-1zM244,617h1v1h-1zM244,620h1v1.5h-1zM251,584h1v1h-1zM255,583h1v1h-1zM259,585h1v1h-1zM261,584h1v1h-1zM264,584h1v1h-1zM267,584h1v1h-1zM268,584h1v1h-1zM271,584h1v1h-1zM272,585h1v1h-1zM277,584h1v1h-1zM283,583h1v1h-1zM283,586h1v1.5h-1zM295,584h1v1h-1zM297,584h1v1h-1zM301,583h1v1h-1zM307,584h1v1h-1zM308,583h1v1h-1zM309,584h1v1h-1zM311,584h1v1h-1zM314,583h1v1h-1zM315,583h1v1h-1zM320,584h1v1h-1zM321,584h1v1h-1zM322,583h1v1h-1zM324,585h1v1h-1zM324,586h1v1.5h-1zM325,583h1v1h-1zM327,583h1v1h-1zM329,584h1v1h-1zM331,583h1v1h-1zM331,586h1v1.5h-1zM332,585h1v1h-1zM334,583h1v1h-1zM336,584h1v1h-1zM337,583h1v1h-1zM339,585h1v1h-1zM339,586h1v1.5h-1zM340,585h1v1h-1zM343,584h1v1h-1zM345,584h1v1h-1zM347,585h1v1h-1zM350,584h1v1h-1zM351,585h1v1h-1zM356,584h1v1h-1zM358,585h1v1h-1zM358,586h1v1.5h-1zM360,584h1v1h-1zM361,584h1v1h-1zM363,584h1v1h-1zM367,585h1v1h-1zM372,583h1v1h-1zM373,584h1v1h-1zM374,586h1v1.5h-1zM376,583h1v1h-1zM378,583h1v1h-1zM382,585h1v1h-1zM386,583h1v1h-1zM388,586h1v1.5h-1zM392,584h1v1h-1zM394,583h1v1h-1zM396,583h1v1h-1zM402,584h1v1h-1zM405,586h1v1.5h-1zM406,584h1v1h-1zM407,585h1v1h-1zM411,585h1v1h-1zM415,584h1v1h-1zM416,584h1v1h-1zM417,583h1v1h-1zM418,583h1v1h-1zM419,584h1v1h-1zM421,586h1v1.5h-1zM424,584h1v1h-1zM425,583h1v1h-1zM430,584h1v1h-1zM431,584h1v1h-1zM432,584h1v1h-1zM433,584h1v1h-1zM438,584h1v1h-1zM440,584h1v1h-1zM440,586h1v1.5h-1zM444,584h1v1h-1zM445,585h1v1h-1zM446,584h1v1h-1zM452,584h1v1h-1zM454,583h1v1h-1zM457,584h1v1h-1zM459,583h1v1h-1zM460,584h1v1h-1zM462,585h1v1h-1zM463,584h1v1h-1zM463,586h1v1.5h-1zM466,583h1v1h-1zM470,584h1v1h-1zM470,586h1v1.5h-1zM477,583h1v1h-1zM478,584h1v1h-1zM483,585h1v1h-1zM484,584h1v1h-1zM486,585h1v1h-1zM487,584h1v1h-1zM488,583h1v1h-1zM490,584h1v1h-1zM491,585h1v1h-1zM494,585h1v1h-1zM505,584h1v1h-1zM506,584h1v1h-1zM510,584h1v1h-1zM511,586h1v1.5h-1zM512,584h1v1h-1zM517,584h1v1h-1zM518,585h1v1h-1zM518,586h1v1.5h-1zM521,584h1v1h-1zM524,584h1v1h-1zM526,586h1v1.5h-1zM527,584h1v1h-1zM528,586h1v1.5h-1zM536,584h1v1h-1zM537,584h1v1h-1zM540,584h1v1h-1zM541,583h1v1h-1zM544,585h1v1h-1zM548,583h1v1h-1zM551,584h1v1h-1zM553,584h1v1h-1zM557,584h1v1h-1zM561,585h1v1h-1zM564,584h1v1h-1zM567,583h1v1h-1zM568,584h1v1h-1zM571,585h1v1h-1zM572,584h1v1h-1zM574,583h1v1h-1zM581,584h1v1h-1zM581,586h1v1.5h-1zM582,583h1v1h-1zM584,583h1v1h-1zM586,583h1v1h-1zM591,584h1v1h-1zM594,583h1v1h-1zM594,586h1v1.5h-1zM595,583h1v1h-1zM598,584h1v1h-1zM600,586h1v1.5h-1zM605,585h1v1h-1zM607,584h1v1h-1zM620,586h1v1.5h-1zM621,586h1v1.5h-1zM624,585h1v1h-1zM627,584h1v1h-1zM628,584h1v1h-1zM630,585h1v1h-1zM633,584h1v1h-1zM634,584h1v1h-1zM634,586h1v1.5h-1zM636,585h1v1h-1zM637,584h1v1h-1zM644,584h1v1h-1zM645,585h1v1h-1zM646,585h1v1h-1zM647,586h1v1.5h-1zM648,583h1v1h-1zM648,586h1v1.5h-1zM651,584h1v1h-1zM652,585h1v1h-1zM653,586h1v1.5h-1zM654,584h1v1h-1zM660,584h1v1h-1zM660,586h1v1.5h-1zM661,583h1v1h-1zM662,584h1v1h-1zM663,583h1v1h-1zM671,586h1v1.5h-1zM673,585h1v1h-1zM675,583h1v1h-1zM676,584h1v1h-1zM684,584h1v1h-1zM687,584h1v1h-1zM689,585h1v1h-1zM692,584h1v1h-1zM693,584h1v1h-1zM697,584h1v1h-1zM699,584h1v1h-1zM703,585h1v1h-1zM706,584h1v1h-1zM709,586h1v1.5h-1zM710,584h1v1h-1zM711,584h1v1h-1zM712,584h1v1h-1zM713,585h1v1h-1zM714,585h1v1h-1zM715,584h1v1h-1zM717,584h1v1h-1zM719,584h1v1h-1zM721,584h1v1h-1zM722,583h1v1h-1zM726,585h1v1h-1zM729,585h1v1h-1zM735,584h1v1h-1zM736,586h1v1.5h-1zM738,585h1v1h-1zM744,584h1v1h-1zM747,585h1v1h-1zM750,584h1v1h-1zM753,584h1v1h-1zM757,583h1v1h-1zM758,583h1v1h-1zM760,585h1v1h-1zM766,583h1v1h-1zM767,586h1v1.5h-1zM769,584h1v1h-1zM771,584h1v1h-1zM773,583h1v1h-1zM774,583h1v1h-1zM777,583h1v1h-1zM778,584h1v1h-1zM779,584h1v1h-1zM782,584h1v1h-1zM784,586h1v1.5h-1zM786,583h1v1h-1zM787,584h1v1h-1zM792,584h1v1h-1zM792,586h1v1.5h-1zM795,584h1v1h-1zM797,584h1v1h-1zM801,584h1v1h-1zM803,585h1v1h-1zM804,584h1v1h-1zM806,585h1v1h-1zM809,583h1v1h-1zM814,583h1v1h-1zM816,583h1v1h-1zM817,584h1v1h-1zM823,584h1v1h-1zM825,583h1v1h-1zM828,584h1v1h-1zM829,583h1v1h-1zM833,583h1v1h-1zM834,584h1v1h-1zM835,584h1v1h-1zM836,585h1v1h-1zM837,584h1v1h-1zM839,584h1v1h-1zM842,584h1v1h-1zM844,585h1v1h-1zM844,586h1v1.5h-1zM846,583h1v1h-1zM850,585h1v1h-1zM861,584h1v1h-1zM865,585h1v1h-1zM868,584h1v1h-1zM870,584h1v1h-1zM871,583h1v1h-1zM873,584h1v1h-1zM874,584h1v1h-1zM875,586h1v1.5h-1zM876,584h1v1h-1zM879,583h1v1h-1zM881,584h1v1h-1zM882,585h1v1h-1zM883,584h1v1h-1zM885,584h1v1h-1zM886,584h1v1h-1zM892,584h1v1h-1zM898,583h1v1h-1zM901,586h1v1.5h-1zM902,584h1v1h-1zM902,586h1v1.5h-1zM904,583h1v1h-1zM905,584h1v1h-1zM906,583h1v1h-1zM911,584h1v1h-1zM914,583h1v1h-1zM916,583h1v1h-1zM919,585h1v1h-1zM920,585h1v1h-1zM922,585h1v1h-1zM923,585h1v1h-1zM926,585h1v1h-1zM928,585h1v1h-1zM930,583h1v1h-1zM934,584h1v1h-1zM939,583h1v1h-1zM943,584h1v1h-1zM944,585h1v1h-1zM946,583h1v1h-1zM947,583h1v1h-1zM950,584h1v1h-1zM958,584h1v1h-1zM962,583h1v1h-1zM967,586h1v1.5h-1zM973,583h1v1h-1zM974,584h1v1h-1zM975,584h1v1h-1zM978,583h1v1h-1zM984,584h1v1h-1zM985,584h1v1h-1zM986,586h1v1.5h-1zM989,584h1v1h-1zM992,584h1v1h-1zM999,586h1v1.5h-1zM1001,584h1v1h-1zM1003,584h1v1h-1zM1005,583h1v1h-1zM1006,585h1v1h-1zM1007,583h1v1h-1zM1008,584h1v1h-1zM1012,583h1v1h-1zM1014,583h1v1h-1zM1015,583h1v1h-1zM1016,585h1v1h-1zM1018,584h1v1h-1zM1019,584h1v1h-1z" fill="#7a0088" opacity="0.8"/>
<path d="M249.7,619 L249.7,579" stroke="#9000a0" stroke-width="1.3" fill="none"/>
</g>
<path d="M21,177h1v1h-1zM21,187h1v1h-1zM21,197h1v1h-1zM21,207h1v1h-1zM21,227h1v1h-1zM21,237h1v1h-1zM21,247h1v1h-1zM21,257h1v1h-1zM21,277h1v1h-1zM21,287h1v1h-1zM21,297h1v1h-1zM21,307h1v1h-1zM21,327h1v1h-1zM21,337h1v1h-1zM21,347h1v1h-1zM21,357h1v1h-1zM21,377h1v1h-1zM21,387h1v1h-1zM21,397h1v1h-1zM21,407h1v1h-1zM21,417h1v1h-1zM21,427h1v1h-1zM21,437h1v1h-1zM21,447h1v1h-1zM21,457h1v1h-1zM21,477h1v1h-1zM21,487h1v1h-1zM21,497h1v1h-1zM21,507h1v1h-1zM21,527h1v1h-1zM21,537h1v1h-1zM21,547h1v1h-1zM21,557h1v1h-1zM21,577h1v1h-1zM21,587h1v1h-1zM21,597h1v1h-1zM21,607h1v1h-1zM21,627h1v1h-1zM21,637h1v1h-1zM21,647h1v1h-1zM21,657h1v1h-1zM22,217h1v1h-1zM22,267h1v1h-1zM22,317h1v1h-1zM22,367h1v1h-1zM22,467h1v1h-1zM22,517h1v1h-1zM22,567h1v1h-1zM22,617h1v1h-1zM23,177h1v1h-1zM23,187h1v1h-1zM23,197h1v1h-1zM23,207h1v1h-1zM23,227h1v1h-1zM23,237h1v1h-1zM23,247h1v1h-1zM23,257h1v1h-1zM23,277h1v1h-1zM23,287h1v1h-1zM23,297h1v1h-1zM23,307h1v1h-1zM23,327h1v1h-1zM23,337h1v1h-1zM23,347h1v1h-1zM23,357h1v1h-1zM23,377h1v1h-1zM23,387h1v1h-1zM23,397h1v1h-1zM23,407h1v1h-1zM23,417h1v1h-1zM23,427h1v1h-1zM23,437h1v1h-1zM23,447h1v1h-1zM23,457h1v1h-1zM23,477h1v1h-1zM23,487h1v1h-1zM23,497h1v1h-1zM23,507h1v1h-1zM23,527h1v1h-1zM23,537h1v1h-1zM23,547h1v1h-1zM23,557h1v1h-1zM23,577h1v1h-1zM23,587h1v1h-1zM23,597h1v1h-1zM23,607h1v1h-1zM23,627h1v1h-1zM23,637h1v1h-1zM23,647h1v1h-1zM23,657h1v1h-1zM24,217h1v1h-1zM24,267h1v1h-1zM24,317h1v1h-1zM24,367h1v1h-1zM24,467h1v1h-1zM24,517h1v1h-1zM24,567h1v1h-1zM24,617h1v1h-1zM25,417h1v1h-1zM26,217h1v1h-1zM26,267h1v1h-1zM26,317h1v1h-1zM26,367h1v1h-1zM26,467h1v1h-1zM26,517h1v1h-1zM26,567h1v1h-1zM26,617h1v1h-1zM27,417h1v1h-1zM29,417h1v1h-1zM31,417h1v1h-1zM33,417h1v1h-1zM35,417h1v1h-1zM37,417h1v1h-1zM39,417h1v1h-1zM41,167h1v1h-1zM41,169h1v1h-1zM41,217h1v1h-1zM41,267h1v1h-1zM41,317h1v1h-1zM41,367h1v1h-1zM41,414h1v1h-1zM41,416h1v1h-1zM41,417h1v1h-1zM41,418h1v1h-1zM41,420h1v1h-1zM41,467h1v1h-1zM41,517h1v1h-1zM41,567h1v1h-1zM41,617h1v1h-1zM41,665h1v1h-1zM41,667h1v1h-1zM43,417h1v1h-1zM45,417h1v1h-1zM47,417h1v1h-1zM49,417h1v1h-1zM51,417h1v1h-1zM53,417h1v1h-1zM55,417h1v1h-1zM57,417h1v1h-1zM59,417h1v1h-1zM61,167h1v1h-1zM61,169h1v1h-1zM61,217h1v1h-1zM61,267h1v1h-1zM61,317h1v1h-1zM61,367h1v1h-1zM61,414h1v1h-1zM61,416h1v1h-1zM61,417h1v1h-1zM61,418h1v1h-1zM61,420h1v1h-1zM61,467h1v1h-1zM61,517h1v1h-1zM61,567h1v1h-1zM61,617h1v1h-1zM61,665h1v1h-1zM61,667h1v1h-1zM63,417h1v1h-1zM65,417h1v1h-1zM67,417h1v1h-1zM69,417h1v1h-1zM71,417h1v1h-1zM73,417h1v1h-1zM75,417h1v1h-1zM77,417h1v1h-1zM79,417h1v1h-1zM81,167h1v1h-1zM81,169h1v1h-1zM81,217h1v1h-1zM81,267h1v1h-1zM81,317h1v1h-1zM81,367h1v1h-1zM81,414h1v1h-1zM81,416h1v1h-1zM81,417h1v1h-1zM81,418h1v1h-1zM81,420h1v1h-1zM81,467h1v1h-1zM81,517h1v1h-1zM81,567h1v1h-1zM81,617h1v1h-1zM81,665h1v1h-1zM81,667h1v1h-1zM83,417h1v1h-1zM85,417h1v1h-1zM87,417h1v1h-1zM89,417h1v1h-1zM91,417h1v1h-1zM93,417h1v1h-1zM95,417h1v1h-1zM97,417h1v1h-1zM99,417h1v1h-1zM101,167h1v1h-1zM101,169h1v1h-1zM101,217h1v1h-1zM101,267h1v1h-1zM101,317h1v1h-1zM101,367h1v1h-1zM101,414h1v1h-1zM101,416h1v1h-1zM101,417h1v1h-1zM101,418h1v1h-1zM101,420h1v1h-1zM101,467h1v1h-1zM101,517h1v1h-1zM101,567h1v1h-1zM101,617h1v1h-1zM101,665h1v1h-1zM101,667h1v1h-1zM103,417h1v1h-1zM105,417h1v1h-1zM107,417h1v1h-1zM109,417h1v1h-1zM111,417h1v1h-1zM113,417h1v1h-1zM115,417h1v1h-1zM117,417h1v1h-1zM119,417h1v1h-1zM121,168h1v1h-1zM121,170h1v1h-1zM121,172h1v1h-1zM121,177h1v1h-1zM121,187h1v1h-1zM121,197h1v1h-1zM121,207h1v1h-1zM121,217h1v1h-1zM121,227h1v1h-1zM121,237h1v1h-1zM121,247h1v1h-1zM121,257h1v1h-1zM121,267h1v1h-1zM121,277h1v1h-1zM121,287h1v1h-1zM121,297h1v1h-1zM121,307h1v1h-1zM121,317h1v1h-1zM121,327h1v1h-1zM121,337h1v1h-1zM121,347h1v1h-1zM121,357h1v1h-1zM121,367h1v1h-1zM121,377h1v1h-1zM121,387h1v1h-1zM121,397h1v1h-1zM121,407h1v1h-1zM121,414h1v1h-1zM121,416h1v1h-1zM121,417h1v1h-1zM121,418h1v1h-1zM121,420h1v1h-1zM121,427h1v1h-1zM121,437h1v1h-1zM121,447h1v1h-1zM121,457h1v1h-1zM121,467h1v1h-1zM121,477h1v1h-1zM121,487h1v1h-1zM121,497h1v1h-1zM121,507h1v1h-1zM121,517h1v1h-1zM121,527h1v1h-1zM121,537h1v1h-1zM121,547h1v1h-1zM121,557h1v1h-1zM121,567h1v1h-1zM121,577h1v1h-1zM121,587h1v1h-1zM121,597h1v1h-1zM121,607h1v1h-1zM121,617h1v1h-1zM121,627h1v1h-1zM121,637h1v1h-1zM121,647h1v1h-1zM121,657h1v1h-1zM121,662h1v1h-1zM121,664h1v1h-1zM121,666h1v1h-1zM123,417h1v1h-1zM125,417h1v1h-1zM127,417h1v1h-1zM129,417h1v1h-1zM131,417h1v1h-1zM133,417h1v1h-1zM135,417h1v1h-1zM137,417h1v1h-1zM139,417h1v1h-1zM141,167h1v1h-1zM141,169h1v1h-1zM141,217h1v1h-1zM141,267h1v1h-1zM141,317h1v1h-1zM141,367h1v1h-1zM141,414h1v1h-1zM141,416h1v1h-1zM141,417h1v1h-1zM141,418h1v1h-1zM141,420h1v1h-1zM141,467h1v1h-1zM141,517h1v1h-1zM141,567h1v1h-1zM141,617h1v1h-1zM141,665h1v1h-1zM141,667h1v1h-1zM143,417h1v1h-1zM145,417h1v1h-1zM147,417h1v1h-1zM149,417h1v1h-1zM151,417h1v1h-1zM153,417h1v1h-1zM155,417h1v1h-1zM157,417h1v1h-1zM159,417h1v1h-1zM161,167h1v1h-1zM161,169h1v1h-1zM161,217h1v1h-1zM161,267h1v1h-1zM161,317h1v1h-1zM161,367h1v1h-1zM161,414h1v1h-1zM161,416h1v1h-1zM161,417h1v1h-1zM161,418h1v1h-1zM161,420h1v1h-1zM161,467h1v1h-1zM161,517h1v1h-1zM161,567h1v1h-1zM161,617h1v1h-1zM161,665h1v1h-1zM161,667h1v1h-1zM163,417h1v1h-1zM165,417h1v1h-1zM167,417h1v1h-1zM169,417h1v1h-1zM171,417h1v1h-1zM173,417h1v1h-1zM175,417h1v1h-1zM177,417h1v1h-1zM179,417h1v1h-1zM181,167h1v1h-1zM181,169h1v1h-1zM181,217h1v1h-1zM181,267h1v1h-1zM181,317h1v1h-1zM181,367h1v1h-1zM181,414h1v1h-1zM181,416h1v1h-1zM181,417h1v1h-1zM181,418h1v1h-1zM181,420h1v1h-1zM181,467h1v1h-1zM181,517h1v1h-1zM181,567h1v1h-1zM181,617h1v1h-1zM181,665h1v1h-1zM181,667h1v1h-1zM183,417h1v1h-1zM185,417h1v1h-1zM187,417h1v1h-1zM189,417h1v1h-1zM191,417h1v1h-1zM193,417h1v1h-1zM195,417h1v1h-1zM197,417h1v1h-1zM199,417h1v1h-1zM201,167h1v1h-1zM201,169h1v1h-1zM201,217h1v1h-1zM201,267h1v1h-1zM201,317h1v1h-1zM201,367h1v1h-1zM201,414h1v1h-1zM201,416h1v1h-1zM201,417h1v1h-1zM201,418h1v1h-1zM201,420h1v1h-1zM201,467h1v1h-1zM201,517h1v1h-1zM201,567h1v1h-1zM201,617h1v1h-1zM201,665h1v1h-1zM201,667h1v1h-1zM203,417h1v1h-1zM205,417h1v1h-1zM207,417h1v1h-1zM209,417h1v1h-1zM211,417h1v1h-1zM213,417h1v1h-1zM215,417h1v1h-1zM217,417h1v1h-1zM219,417h1v1h-1zM221,168h1v1h-1zM221,170h1v1h-1zM221,172h1v1h-1zM221,177h1v1h-1zM221,187h1v1h-1zM221,197h1v1h-1zM221,207h1v1h-1zM221,217h1v1h-1zM221,227h1v1h-1zM221,237h1v1h-1zM221,247h1v1h-1zM221,257h1v1h-1zM221,267h1v1h-1zM221,277h1v1h-1zM221,287h1v1h-1zM221,297h1v1h-1zM221,307h1v1h-1zM221,317h1v1h-1zM221,327h1v1h-1zM221,337h1v1h-1zM221,347h1v1h-1zM221,357h1v1h-1zM221,367h1v1h-1zM221,377h1v1h-1zM221,387h1v1h-1zM221,397h1v1h-1zM221,407h1v1h-1zM221,414h1v1h-1zM221,416h1v1h-1zM221,417h1v1h-1zM221,418h1v1h-1zM221,420h1v1h-1zM221,427h1v1h-1zM221,437h1v1h-1zM221,447h1v1h-1zM221,457h1v1h-1zM221,467h1v1h-1zM221,477h1v1h-1zM221,487h1v1h-1zM221,497h1v1h-1zM221,507h1v1h-1zM221,517h1v1h-1zM221,527h1v1h-1zM221,537h1v1h-1zM221,547h1v1h-1zM221,557h1v1h-1zM221,567h1v1h-1zM221,577h1v1h-1zM221,587h1v1h-1zM221,597h1v1h-1zM221,607h1v1h-1zM221,617h1v1h-1zM221,627h1v1h-1zM221,637h1v1h-1zM221,647h1v1h-1zM221,657h1v1h-1zM221,662h1v1h-1zM221,664h1v1h-1zM221,666h1v1h-1zM223,417h1v1h-1zM225,417h1v1h-1zM227,417h1v1h-1zM229,417h1v1h-1zM231,417h1v1h-1zM233,417h1v1h-1zM235,417h1v1h-1zM237,417h1v1h-1zM239,417h1v1h-1zM241,167h1v1h-1zM241,169h1v1h-1zM241,217h1v1h-1zM241,267h1v1h-1zM241,317h1v1h-1zM241,367h1v1h-1zM241,414h1v1h-1zM241,416h1v1h-1zM241,417h1v1h-1zM241,418h1v1h-1zM241,420h1v1h-1zM241,467h1v1h-1zM241,517h1v1h-1zM241,567h1v1h-1zM241,617h1v1h-1zM241,665h1v1h-1zM241,667h1v1h-1zM243,417h1v1h-1zM245,417h1v1h-1zM247,417h1v1h-1zM249,417h1v1h-1zM251,417h1v1h-1zM253,417h1v1h-1zM255,417h1v1h-1zM257,417h1v1h-1zM259,417h1v1h-1zM261,167h1v1h-1zM261,169h1v1h-1zM261,217h1v1h-1zM261,267h1v1h-1zM261,317h1v1h-1zM261,367h1v1h-1zM261,414h1v1h-1zM261,416h1v1h-1zM261,417h1v1h-1zM261,418h1v1h-1zM261,420h1v1h-1zM261,467h1v1h-1zM261,517h1v1h-1zM261,567h1v1h-1zM261,617h1v1h-1zM261,665h1v1h-1zM261,667h1v1h-1zM263,417h1v1h-1zM265,417h1v1h-1zM267,417h1v1h-1zM269,417h1v1h-1zM271,417h1v1h-1zM273,417h1v1h-1zM275,417h1v1h-1zM277,417h1v1h-1zM279,417h1v1h-1zM281,167h1v1h-1zM281,169h1v1h-1zM281,217h1v1h-1zM281,267h1v1h-1zM281,317h1v1h-1zM281,367h1v1h-1zM281,414h1v1h-1zM281,416h1v1h-1zM281,417h1v1h-1zM281,418h1v1h-1zM281,420h1v1h-1zM281,467h1v1h-1zM281,517h1v1h-1zM281,567h1v1h-1zM281,617h1v1h-1zM281,665h1v1h-1zM281,667h1v1h-1zM283,417h1v1h-1zM285,417h1v1h-1zM287,417h1v1h-1zM289,417h1v1h-1zM291,417h1v1h-1zM293,417h1v1h-1zM295,417h1v1h-1zM297,417h1v1h-1zM299,417h1v1h-1zM301,167h1v1h-1zM301,169h1v1h-1zM301,217h1v1h-1zM301,267h1v1h-1zM301,317h1v1h-1zM301,367h1v1h-1zM301,414h1v1h-1zM301,416h1v1h-1zM301,417h1v1h-1zM301,418h1v1h-1zM301,420h1v1h-1zM301,467h1v1h-1zM301,517h1v1h-1zM301,567h1v1h-1zM301,617h1v1h-1zM301,665h1v1h-1zM301,667h1v1h-1zM303,417h1v1h-1zM305,417h1v1h-1zM307,417h1v1h-1zM309,417h1v1h-1zM311,417h1v1h-1zM313,417h1v1h-1zM315,417h1v1h-1zM317,417h1v1h-1zM319,417h1v1h-1zM321,168h1v1h-1zM321,170h1v1h-1zM321,172h1v1h-1zM321,177h1v1h-1zM321,187h1v1h-1zM321,197h1v1h-1zM321,207h1v1h-1zM321,217h1v1h-1zM321,227h1v1h-1zM321,237h1v1h-1zM321,247h1v1h-1zM321,257h1v1h-1zM321,267h1v1h-1zM321,277h1v1h-1zM321,287h1v1h-1zM321,297h1v1h-1zM321,307h1v1h-1zM321,317h1v1h-1zM321,327h1v1h-1zM321,337h1v1h-1zM321,347h1v1h-1zM321,357h1v1h-1zM321,367h1v1h-1zM321,377h1v1h-1zM321,387h1v1h-1zM321,397h1v1h-1zM321,407h1v1h-1zM321,414h1v1h-1zM321,416h1v1h-1zM321,417h1v1h-1zM321,418h1v1h-1zM321,420h1v1h-1zM321,427h1v1h-1zM321,437h1v1h-1zM321,447h1v1h-1zM321,457h1v1h-1zM321,467h1v1h-1zM321,477h1v1h-1zM321,487h1v1h-1zM321,497h1v1h-1zM321,507h1v1h-1zM321,517h1v1h-1zM321,527h1v1h-1zM321,537h1v1h-1zM321,547h1v1h-1zM321,557h1v1h-1zM321,567h1v1h-1zM321,577h1v1h-1zM321,587h1v1h-1zM321,597h1v1h-1zM321,607h1v1h-1zM321,617h1v1h-1zM321,627h1v1h-1zM321,637h1v1h-1zM321,647h1v1h-1zM321,657h1v1h-1zM321,662h1v1h-1zM321,664h1v1h-1zM321,666h1v1h-1zM323,417h1v1h-1zM325,417h1v1h-1zM327,417h1v1h-1zM329,417h1v1h-1zM331,417h1v1h-1zM333,417h1v1h-1zM335,417h1v1h-1zM337,417h1v1h-1zM339,417h1v1h-1zM341,167h1v1h-1zM341,169h1v1h-1zM341,217h1v1h-1zM341,267h1v1h-1zM341,317h1v1h-1zM341,367h1v1h-1zM341,414h1v1h-1zM341,416h1v1h-1zM341,417h1v1h-1zM341,418h1v1h-1zM341,420h1v1h-1zM341,467h1v1h-1zM341,517h1v1h-1zM341,567h1v1h-1zM341,617h1v1h-1zM341,665h1v1h-1zM341,667h1v1h-1zM343,417h1v1h-1zM345,417h1v1h-1zM347,417h1v1h-1zM349,417h1v1h-1zM351,417h1v1h-1zM353,417h1v1h-1zM355,417h1v1h-1zM357,417h1v1h-1zM359,417h1v1h-1zM361,167h1v1h-1zM361,169h1v1h-1zM361,217h1v1h-1zM361,267h1v1h-1zM361,317h1v1h-1zM361,367h1v1h-1zM361,414h1v1h-1zM361,416h1v1h-1zM361,417h1v1h-1zM361,418h1v1h-1zM361,420h1v1h-1zM361,467h1v1h-1zM361,517h1v1h-1zM361,567h1v1h-1zM361,617h1v1h-1zM361,665h1v1h-1zM361,667h1v1h-1zM363,417h1v1h-1zM365,417h1v1h-1zM367,417h1v1h-1zM369,417h1v1h-1zM371,417h1v1h-1zM373,417h1v1h-1zM375,417h1v1h-1zM377,417h1v1h-1zM379,417h1v1h-1zM381,167h1v1h-1zM381,169h1v1h-1zM381,217h1v1h-1zM381,267h1v1h-1zM381,317h1v1h-1zM381,367h1v1h-1zM381,414h1v1h-1zM381,416h1v1h-1zM381,417h1v1h-1zM381,418h1v1h-1zM381,420h1v1h-1zM381,467h1v1h-1zM381,517h1v1h-1zM381,567h1v1h-1zM381,617h1v1h-1zM381,665h1v1h-1zM381,667h1v1h-1zM383,417h1v1h-1zM385,417h1v1h-1zM387,417h1v1h-1zM389,417h1v1h-1zM391,417h1v1h-1zM393,417h1v1h-1zM395,417h1v1h-1zM397,417h1v1h-1zM399,417h1v1h-1zM401,167h1v1h-1zM401,169h1v1h-1zM401,217h1v1h-1zM401,267h1v1h-1zM401,317h1v1h-1zM401,367h1v1h-1zM401,414h1v1h-1zM401,416h1v1h-1zM401,417h1v1h-1zM401,418h1v1h-1zM401,420h1v1h-1zM401,467h1v1h-1zM401,517h1v1h-1zM401,567h1v1h-1zM401,617h1v1h-1zM401,665h1v1h-1zM401,667h1v1h-1zM403,417h1v1h-1zM405,417h1v1h-1zM407,417h1v1h-1zM409,417h1v1h-1zM411,417h1v1h-1zM413,417h1v1h-1zM415,417h1v1h-1zM417,417h1v1h-1zM419,417h1v1h-1zM421,168h1v1h-1zM421,170h1v1h-1zM421,172h1v1h-1zM421,177h1v1h-1zM421,187h1v1h-1zM421,197h1v1h-1zM421,207h1v1h-1zM421,217h1v1h-1zM421,227h1v1h-1zM421,237h1v1h-1zM421,247h1v1h-1zM421,257h1v1h-1zM421,267h1v1h-1zM421,277h1v1h-1zM421,287h1v1h-1zM421,297h1v1h-1zM421,307h1v1h-1zM421,317h1v1h-1zM421,327h1v1h-1zM421,337h1v1h-1zM421,347h1v1h-1zM421,357h1v1h-1zM421,367h1v1h-1zM421,377h1v1h-1zM421,387h1v1h-1zM421,397h1v1h-1zM421,407h1v1h-1zM421,414h1v1h-1zM421,416h1v1h-1zM421,417h1v1h-1zM421,418h1v1h-1zM421,420h1v1h-1zM421,427h1v1h-1zM421,437h1v1h-1zM421,447h1v1h-1zM421,457h1v1h-1zM421,467h1v1h-1zM421,477h1v1h-1zM421,487h1v1h-1zM421,497h1v1h-1zM421,507h1v1h-1zM421,517h1v1h-1zM421,527h1v1h-1zM421,537h1v1h-1zM421,547h1v1h-1zM421,557h1v1h-1zM421,567h1v1h-1zM421,577h1v1h-1zM421,587h1v1h-1zM421,597h1v1h-1zM421,607h1v1h-1zM421,617h1v1h-1zM421,627h1v1h-1zM421,637h1v1h-1zM421,647h1v1h-1zM421,657h1v1h-1zM421,662h1v1h-1zM421,664h1v1h-1zM421,666h1v1h-1zM423,417h1v1h-1zM425,417h1v1h-1zM427,417h1v1h-1zM429,417h1v1h-1zM431,417h1v1h-1zM433,417h1v1h-1zM435,417h1v1h-1zM437,417h1v1h-1zM439,417h1v1h-1zM441,167h1v1h-1zM441,169h1v1h-1zM441,217h1v1h-1zM441,267h1v1h-1zM441,317h1v1h-1zM441,367h1v1h-1zM441,414h1v1h-1zM441,416h1v1h-1zM441,417h1v1h-1zM441,418h1v1h-1zM441,420h1v1h-1zM441,467h1v1h-1zM441,517h1v1h-1zM441,567h1v1h-1zM441,617h1v1h-1zM441,665h1v1h-1zM441,667h1v1h-1zM443,417h1v1h-1zM445,417h1v1h-1zM447,417h1v1h-1zM449,417h1v1h-1zM451,417h1v1h-1zM453,417h1v1h-1zM455,417h1v1h-1zM457,417h1v1h-1zM459,417h1v1h-1zM461,167h1v1h-1zM461,169h1v1h-1zM461,217h1v1h-1zM461,267h1v1h-1zM461,317h1v1h-1zM461,367h1v1h-1zM461,414h1v1h-1zM461,416h1v1h-1zM461,417h1v1h-1zM461,418h1v1h-1zM461,420h1v1h-1zM461,467h1v1h-1zM461,517h1v1h-1zM461,567h1v1h-1zM461,617h1v1h-1zM461,665h1v1h-1zM461,667h1v1h-1zM463,417h1v1h-1zM465,417h1v1h-1zM467,417h1v1h-1zM469,417h1v1h-1zM471,417h1v1h-1zM473,417h1v1h-1zM475,417h1v1h-1zM477,417h1v1h-1zM479,417h1v1h-1zM481,167h1v1h-1zM481,169h1v1h-1zM481,217h1v1h-1zM481,267h1v1h-1zM481,317h1v1h-1zM481,367h1v1h-1zM481,414h1v1h-1zM481,416h1v1h-1zM481,417h1v1h-1zM481,418h1v1h-1zM481,420h1v1h-1zM481,467h1v1h-1zM481,517h1v1h-1zM481,567h1v1h-1zM481,617h1v1h-1zM481,665h1v1h-1zM481,667h1v1h-1zM483,417h1v1h-1zM485,417h1v1h-1zM487,417h1v1h-1zM489,417h1v1h-1zM491,417h1v1h-1zM493,417h1v1h-1zM495,417h1v1h-1zM497,417h1v1h-1zM499,417h1v1h-1zM501,167h1v1h-1zM501,169h1v1h-1zM501,217h1v1h-1zM501,267h1v1h-1zM501,317h1v1h-1zM501,367h1v1h-1zM501,414h1v1h-1zM501,416h1v1h-1zM501,417h1v1h-1zM501,418h1v1h-1zM501,420h1v1h-1zM501,467h1v1h-1zM501,517h1v1h-1zM501,567h1v1h-1zM501,617h1v1h-1zM501,665h1v1h-1zM501,667h1v1h-1zM503,417h1v1h-1zM505,417h1v1h-1zM507,417h1v1h-1zM509,417h1v1h-1zM511,417h1v1h-1zM513,417h1v1h-1zM515,417h1v1h-1zM517,417h1v1h-1zM518,177h1v1h-1zM518,187h1v1h-1zM518,197h1v1h-1zM518,207h1v1h-1zM518,217h1v1h-1zM518,227h1v1h-1zM518,237h1v1h-1zM518,247h1v1h-1zM518,257h1v1h-1zM518,267h1v1h-1zM518,277h1v1h-1zM518,287h1v1h-1zM518,297h1v1h-1zM518,307h1v1h-1zM518,317h1v1h-1zM518,327h1v1h-1zM518,337h1v1h-1zM518,347h1v1h-1zM518,357h1v1h-1zM518,367h1v1h-1zM518,377h1v1h-1zM518,387h1v1h-1zM518,397h1v1h-1zM518,407h1v1h-1zM518,427h1v1h-1zM518,437h1v1h-1zM518,447h1v1h-1zM518,457h1v1h-1zM518,467h1v1h-1zM518,477h1v1h-1zM518,487h1v1h-1zM518,497h1v1h-1zM518,507h1v1h-1zM518,517h1v1h-1zM518,527h1v1h-1zM518,537h1v1h-1zM518,547h1v1h-1zM518,557h1v1h-1zM518,567h1v1h-1zM518,577h1v1h-1zM518,587h1v1h-1zM518,597h1v1h-1zM518,607h1v1h-1zM518,617h1v1h-1zM518,627h1v1h-1zM518,637h1v1h-1zM518,647h1v1h-1zM518,657h1v1h-1zM519,417h1v1h-1zM520,177h1v1h-1zM520,187h1v1h-1zM520,197h1v1h-1zM520,207h1v1h-1zM520,217h1v1h-1zM520,227h1v1h-1zM520,237h1v1h-1zM520,247h1v1h-1zM520,257h1v1h-1zM520,267h1v1h-1zM520,277h1v1h-1zM520,287h1v1h-1zM520,297h1v1h-1zM520,307h1v1h-1zM520,317h1v1h-1zM520,327h1v1h-1zM520,337h1v1h-1zM520,347h1v1h-1zM520,357h1v1h-1zM520,367h1v1h-1zM520,377h1v1h-1zM520,387h1v1h-1zM520,397h1v1h-1zM520,407h1v1h-1zM520,427h1v1h-1zM520,437h1v1h-1zM520,447h1v1h-1zM520,457h1v1h-1zM520,467h1v1h-1zM520,477h1v1h-1zM520,487h1v1h-1zM520,497h1v1h-1zM520,507h1v1h-1zM520,517h1v1h-1zM520,527h1v1h-1zM520,537h1v1h-1zM520,547h1v1h-1zM520,557h1v1h-1zM520,567h1v1h-1zM520,577h1v1h-1zM520,587h1v1h-1zM520,597h1v1h-1zM520,607h1v1h-1zM520,617h1v1h-1zM520,627h1v1h-1zM520,637h1v1h-1zM520,647h1v1h-1zM520,657h1v1h-1zM521,168h1v1h-1zM521,170h1v1h-1zM521,172h1v1h-1zM521,174h1v1h-1zM521,176h1v1h-1zM521,177h1v1h-1zM521,178h1v1h-1zM521,180h1v1h-1zM521,182h1v1h-1zM521,184h1v1h-1zM521,186h1v1h-1zM521,187h1v1h-1zM521,188h1v1h-1zM521,190h1v1h-1zM521,192h1v1h-1zM521,194h1v1h-1zM521,196h1v1h-1zM521,197h1v1h-1zM521,198h1v1h-1zM521,200h1v1h-1zM521,202h1v1h-1zM521,204h1v1h-1zM521,206h1v1h-1zM521,207h1v1h-1zM521,208h1v1h-1zM521,210h1v1h-1zM521,212h1v1h-1zM521,214h1v1h-1zM521,216h1v1h-1zM521,217h1v1h-1zM521,218h1v1h-1zM521,220h1v1h-1zM521,222h1v1h-1zM521,224h1v1h-1zM521,226h1v1h-1zM521,227h1v1h-1zM521,228h1v1h-1zM521,230h1v1h-1zM521,232h1v1h-1zM521,234h1v1h-1zM521,236h1v1h-1zM521,237h1v1h-1zM521,238h1v1h-1zM521,240h1v1h-1zM521,242h1v1h-1zM521,244h1v1h-1zM521,246h1v1h-1zM521,247h1v1h-1zM521,248h1v1h-1zM521,250h1v1h-1zM521,252h1v1h-1zM521,254h1v1h-1zM521,256h1v1h-1zM521,257h1v1h-1zM521,258h1v1h-1zM521,260h1v1h-1zM521,262h1v1h-1zM521,264h1v1h-1zM521,266h1v1h-1zM521,267h1v1h-1zM521,268h1v1h-1zM521,270h1v1h-1zM521,272h1v1h-1zM521,274h1v1h-1zM521,276h1v1h-1zM521,277h1v1h-1zM521,278h1v1h-1zM521,280h1v1h-1zM521,282h1v1h-1zM521,284h1v1h-1zM521,286h1v1h-1zM521,287h1v1h-1zM521,288h1v1h-1zM521,290h1v1h-1zM521,292h1v1h-1zM521,294h1v1h-1zM521,296h1v1h-1zM521,297h1v1h-1zM521,298h1v1h-1zM521,300h1v1h-1zM521,302h1v1h-1zM521,304h1v1h-1zM521,306h1v1h-1zM521,307h1v1h-1zM521,308h1v1h-1zM521,310h1v1h-1zM521,312h1v1h-1zM521,314h1v1h-1zM521,316h1v1h-1zM521,317h1v1h-1zM521,318h1v1h-1zM521,320h1v1h-1zM521,322h1v1h-1zM521,324h1v1h-1zM521,326h1v1h-1zM521,327h1v1h-1zM521,328h1v1h-1zM521,330h1v1h-1zM521,332h1v1h-1zM521,334h1v1h-1zM521,336h1v1h-1zM521,337h1v1h-1zM521,338h1v1h-1zM521,340h1v1h-1zM521,342h1v1h-1zM521,344h1v1h-1zM521,346h1v1h-1zM521,347h1v1h-1zM521,348h1v1h-1zM521,350h1v1h-1zM521,352h1v1h-1zM521,354h1v1h-1zM521,356h1v1h-1zM521,357h1v1h-1zM521,358h1v1h-1zM521,360h1v1h-1zM521,362h1v1h-1zM521,364h1v1h-1zM521,366h1v1h-1zM521,367h1v1h-1zM521,368h1v1h-1zM521,370h1v1h-1zM521,372h1v1h-1zM521,374h1v1h-1zM521,376h1v1h-1zM521,377h1v1h-1zM521,378h1v1h-1zM521,380h1v1h-1zM521,382h1v1h-1zM521,384h1v1h-1zM521,386h1v1h-1zM521,387h1v1h-1zM521,388h1v1h-1zM521,390h1v1h-1zM521,392h1v1h-1zM521,394h1v1h-1zM521,396h1v1h-1zM521,397h1v1h-1zM521,398h1v1h-1zM521,400h1v1h-1zM521,402h1v1h-1zM521,404h1v1h-1zM521,406h1v1h-1zM521,407h1v1h-1zM521,408h1v1h-1zM521,410h1v1h-1zM521,412h1v1h-1zM521,414h1v1h-1zM521,416h1v1h-1zM521,417h1v1h-1zM521,418h1v1h-1zM521,420h1v1h-1zM521,422h1v1h-1zM521,424h1v1h-1zM521,426h1v1h-1zM521,427h1v1h-1zM521,428h1v1h-1zM521,430h1v1h-1zM521,432h1v1h-1zM521,434h1v1h-1zM521,436h1v1h-1zM521,437h1v1h-1zM521,438h1v1h-1zM521,440h1v1h-1zM521,442h1v1h-1zM521,444h1v1h-1zM521,446h1v1h-1zM521,447h1v1h-1zM521,448h1v1h-1zM521,450h1v1h-1zM521,452h1v1h-1zM521,454h1v1h-1zM521,456h1v1h-1zM521,457h1v1h-1zM521,458h1v1h-1zM521,460h1v1h-1zM521,462h1v1h-1zM521,464h1v1h-1zM521,466h1v1h-1zM521,467h1v1h-1zM521,468h1v1h-1zM521,470h1v1h-1zM521,472h1v1h-1zM521,474h1v1h-1zM521,476h1v1h-1zM521,477h1v1h-1zM521,478h1v1h-1zM521,480h1v1h-1zM521,482h1v1h-1zM521,484h1v1h-1zM521,486h1v1h-1zM521,487h1v1h-1zM521,488h1v1h-1zM521,490h1v1h-1zM521,492h1v1h-1zM521,494h1v1h-1zM521,496h1v1h-1zM521,497h1v1h-1zM521,498h1v1h-1zM521,500h1v1h-1zM521,502h1v1h-1zM521,504h1v1h-1zM521,506h1v1h-1zM521,507h1v1h-1zM521,508h1v1h-1zM521,510h1v1h-1zM521,512h1v1h-1zM521,514h1v1h-1zM521,516h1v1h-1zM521,517h1v1h-1zM521,518h1v1h-1zM521,520h1v1h-1zM521,522h1v1h-1zM521,524h1v1h-1zM521,526h1v1h-1zM521,527h1v1h-1zM521,528h1v1h-1zM521,530h1v1h-1zM521,532h1v1h-1zM521,534h1v1h-1zM521,536h1v1h-1zM521,537h1v1h-1zM521,538h1v1h-1zM521,540h1v1h-1zM521,542h1v1h-1zM521,544h1v1h-1zM521,546h1v1h-1zM521,547h1v1h-1zM521,548h1v1h-1zM521,550h1v1h-1zM521,552h1v1h-1zM521,554h1v1h-1zM521,556h1v1h-1zM521,557h1v1h-1zM521,558h1v1h-1zM521,560h1v1h-1zM521,562h1v1h-1zM521,564h1v1h-1zM521,566h1v1h-1zM521,567h1v1h-1zM521,568h1v1h-1zM521,570h1v1h-1zM521,572h1v1h-1zM521,574h1v1h-1zM521,576h1v1h-1zM521,577h1v1h-1zM521,578h1v1h-1zM521,580h1v1h-1zM521,582h1v1h-1zM521,584h1v1h-1zM521,586h1v1h-1zM521,587h1v1h-1zM521,588h1v1h-1zM521,590h1v1h-1zM521,592h1v1h-1zM521,594h1v1h-1zM521,596h1v1h-1zM521,597h1v1h-1zM521,598h1v1h-1zM521,600h1v1h-1zM521,602h1v1h-1zM521,604h1v1h-1zM521,606h1v1h-1zM521,607h1v1h-1zM521,608h1v1h-1zM521,610h1v1h-1zM521,612h1v1h-1zM521,614h1v1h-1zM521,616h1v1h-1zM521,617h1v1h-1zM521,618h1v1h-1zM521,620h1v1h-1zM521,622h1v1h-1zM521,624h1v1h-1zM521,626h1v1h-1zM521,627h1v1h-1zM521,628h1v1h-1zM521,630h1v1h-1zM521,632h1v1h-1zM521,634h1v1h-1zM521,636h1v1h-1zM521,637h1v1h-1zM521,638h1v1h-1zM521,640h1v1h-1zM521,642h1v1h-1zM521,644h1v1h-1zM521,646h1v1h-1zM521,647h1v1h-1zM521,648h1v1h-1zM521,650h1v1h-1zM521,652h1v1h-1zM521,654h1v1h-1zM521,656h1v1h-1zM521,657h1v1h-1zM521,658h1v1h-1zM521,660h1v1h-1zM521,662h1v1h-1zM521,664h1v1h-1zM521,666h1v1h-1zM522,177h1v1h-1zM522,187h1v1h-1zM522,197h1v1h-1zM522,207h1v1h-1zM522,217h1v1h-1zM522,227h1v1h-1zM522,237h1v1h-1zM522,247h1v1h-1zM522,257h1v1h-1zM522,267h1v1h-1zM522,277h1v1h-1zM522,287h1v1h-1zM522,297h1v1h-1zM522,307h1v1h-1zM522,317h1v1h-1zM522,327h1v1h-1zM522,337h1v1h-1zM522,347h1v1h-1zM522,357h1v1h-1zM522,367h1v1h-1zM522,377h1v1h-1zM522,387h1v1h-1zM522,397h1v1h-1zM522,407h1v1h-1zM522,427h1v1h-1zM522,437h1v1h-1zM522,447h1v1h-1zM522,457h1v1h-1zM522,467h1v1h-1zM522,477h1v1h-1zM522,487h1v1h-1zM522,497h1v1h-1zM522,507h1v1h-1zM522,517h1v1h-1zM522,527h1v1h-1zM522,537h1v1h-1zM522,547h1v1h-1zM522,557h1v1h-1zM522,567h1v1h-1zM522,577h1v1h-1zM522,587h1v1h-1zM522,597h1v1h-1zM522,607h1v1h-1zM522,617h1v1h-1zM522,627h1v1h-1zM522,637h1v1h-1zM522,647h1v1h-1zM522,657h1v1h-1zM523,417h1v1h-1zM524,177h1v1h-1zM524,187h1v1h-1zM524,197h1v1h-1zM524,207h1v1h-1zM524,217h1v1h-1zM524,227h1v1h-1zM524,237h1v1h-1zM524,247h1v1h-1zM524,257h1v1h-1zM524,267h1v1h-1zM524,277h1v1h-1zM524,287h1v1h-1zM524,297h1v1h-1zM524,307h1v1h-1zM524,317h1v1h-1zM524,327h1v1h-1zM524,337h1v1h-1zM524,347h1v1h-1zM524,357h1v1h-1zM524,367h1v1h-1zM524,377h1v1h-1zM524,387h1v1h-1zM524,397h1v1h-1zM524,407h1v1h-1zM524,427h1v1h-1zM524,437h1v1h-1zM524,447h1v1h-1zM524,457h1v1h-1zM524,467h1v1h-1zM524,477h1v1h-1zM524,487h1v1h-1zM524,497h1v1h-1zM524,507h1v1h-1zM524,517h1v1h-1zM524,527h1v1h-1zM524,537h1v1h-1zM524,547h1v1h-1zM524,557h1v1h-1zM524,567h1v1h-1zM524,577h1v1h-1zM524,587h1v1h-1zM524,597h1v1h-1zM524,607h1v1h-1zM524,617h1v1h-1zM524,627h1v1h-1zM524,637h1v1h-1zM524,647h1v1h-1zM524,657h1v1h-1zM525,417h1v1h-1zM527,417h1v1h-1zM529,417h1v1h-1zM531,417h1v1h-1zM533,417h1v1h-1zM535,417h1v1h-1zM537,417h1v1h-1zM539,417h1v1h-1zM541,167h1v1h-1zM541,169h1v1h-1zM541,217h1v1h-1zM541,267h1v1h-1zM541,317h1v1h-1zM541,367h1v1h-1zM541,414h1v1h-1zM541,416h1v1h-1zM541,417h1v1h-1zM541,418h1v1h-1zM541,420h1v1h-1zM541,467h1v1h-1zM541,517h1v1h-1zM541,567h1v1h-1zM541,617h1v1h-1zM541,665h1v1h-1zM541,667h1v1h-1zM543,417h1v1h-1zM545,417h1v1h-1zM547,417h1v1h-1zM549,417h1v1h-1zM551,417h1v1h-1zM553,417h1v1h-1zM555,417h1v1h-1zM557,417h1v1h-1zM559,417h1v1h-1zM561,167h1v1h-1zM561,169h1v1h-1zM561,217h1v1h-1zM561,267h1v1h-1zM561,317h1v1h-1zM561,367h1v1h-1zM561,414h1v1h-1zM561,416h1v1h-1zM561,417h1v1h-1zM561,418h1v1h-1zM561,420h1v1h-1zM561,467h1v1h-1zM561,517h1v1h-1zM561,567h1v1h-1zM561,617h1v1h-1zM561,665h1v1h-1zM561,667h1v1h-1zM563,417h1v1h-1zM565,417h1v1h-1zM567,417h1v1h-1zM569,417h1v1h-1zM571,417h1v1h-1zM573,417h1v1h-1zM575,417h1v1h-1zM577,417h1v1h-1zM579,417h1v1h-1zM581,167h1v1h-1zM581,169h1v1h-1zM581,217h1v1h-1zM581,267h1v1h-1zM581,317h1v1h-1zM581,367h1v1h-1zM581,414h1v1h-1zM581,416h1v1h-1zM581,417h1v1h-1zM581,418h1v1h-1zM581,420h1v1h-1zM581,467h1v1h-1zM581,517h1v1h-1zM581,567h1v1h-1zM581,617h1v1h-1zM581,665h1v1h-1zM581,667h1v1h-1zM583,417h1v1h-1zM585,417h1v1h-1zM587,417h1v1h-1zM589,417h1v1h-1zM591,417h1v1h-1zM593,417h1v1h-1zM595,417h1v1h-1zM597,417h1v1h-1zM599,417h1v1h-1zM601,167h1v1h-1zM601,169h1v1h-1zM601,217h1v1h-1zM601,267h1v1h-1zM601,317h1v1h-1zM601,367h1v1h-1zM601,414h1v1h-1zM601,416h1v1h-1zM601,417h1v1h-1zM601,418h1v1h-1zM601,420h1v1h-1zM601,467h1v1h-1zM601,517h1v1h-1zM601,567h1v1h-1zM601,617h1v1h-1zM601,665h1v1h-1zM601,667h1v1h-1zM603,417h1v1h-1zM605,417h1v1h-1zM607,417h1v1h-1zM609,417h1v1h-1zM611,417h1v1h-1zM613,417h1v1h-1zM615,417h1v1h-1zM617,417h1v1h-1zM619,417h1v1h-1zM621,168h1v1h-1zM621,170h1v1h-1zM621,172h1v1h-1zM621,177h1v1h-1zM621,187h1v1h-1zM621,197h1v1h-1zM621,207h1v1h-1zM621,217h1v1h-1zM621,227h1v1h-1zM621,237h1v1h-1zM621,247h1v1h-1zM621,257h1v1h-1zM621,267h1v1h-1zM621,277h1v1h-1zM621,287h1v1h-1zM621,297h1v1h-1zM621,307h1v1h-1zM621,317h1v1h-1zM621,327h1v1h-1zM621,337h1v1h-1zM621,347h1v1h-1zM621,357h1v1h-1zM621,367h1v1h-1zM621,377h1v1h-1zM621,387h1v1h-1zM621,397h1v1h-1zM621,407h1v1h-1zM621,414h1v1h-1zM621,416h1v1h-1zM621,417h1v1h-1zM621,418h1v1h-1zM621,420h1v1h-1zM621,427h1v1h-1zM621,437h1v1h-1zM621,447h1v1h-1zM621,457h1v1h-1zM621,467h1v1h-1zM621,477h1v1h-1zM621,487h1v1h-1zM621,497h1v1h-1zM621,507h1v1h-1zM621,517h1v1h-1zM621,527h1v1h-1zM621,537h1v1h-1zM621,547h1v1h-1zM621,557h1v1h-1zM621,567h1v1h-1zM621,577h1v1h-1zM621,587h1v1h-1zM621,597h1v1h-1zM621,607h1v1h-1zM621,617h1v1h-1zM621,627h1v1h-1zM621,637h1v1h-1zM621,647h1v1h-1zM621,657h1v1h-1zM621,662h1v1h-1zM621,664h1v1h-1zM621,666h1v1h-1zM623,417h1v1h-1zM625,417h1v1h-1zM627,417h1v1h-1zM629,417h1v1h-1zM631,417h1v1h-1zM633,417h1v1h-1zM635,417h1v1h-1zM637,417h1v1h-1zM639,417h1v1h-1zM641,167h1v1h-1zM641,169h1v1h-1zM641,217h1v1h-1zM641,267h1v1h-1zM641,317h1v1h-1zM641,367h1v1h-1zM641,414h1v1h-1zM641,416h1v1h-1zM641,417h1v1h-1zM641,418h1v1h-1zM641,420h1v1h-1zM641,467h1v1h-1zM641,517h1v1h-1zM641,567h1v1h-1zM641,617h1v1h-1zM641,665h1v1h-1zM641,667h1v1h-1zM643,417h1v1h-1zM645,417h1v1h-1zM647,417h1v1h-1zM649,417h1v1h-1zM651,417h1v1h-1zM653,417h1v1h-1zM655,417h1v1h-1zM657,417h1v1h-1zM659,417h1v1h-1zM661,167h1v1h-1zM661,169h1v1h-1zM661,217h1v1h-1zM661,267h1v1h-1zM661,317h1v1h-1zM661,367h1v1h-1zM661,414h1v1h-1zM661,416h1v1h-1zM661,417h1v1h-1zM661,418h1v1h-1zM661,420h1v1h-1zM661,467h1v1h-1zM661,517h1v1h-1zM661,567h1v1h-1zM661,617h1v1h-1zM661,665h1v1h-1zM661,667h1v1h-1zM663,417h1v1h-1zM665,417h1v1h-1zM667,417h1v1h-1zM669,417h1v1h-1zM671,417h1v1h-1zM673,417h1v1h-1zM675,417h1v1h-1zM677,417h1v1h-1zM679,417h1v1h-1zM681,167h1v1h-1zM681,169h1v1h-1zM681,217h1v1h-1zM681,267h1v1h-1zM681,317h1v1h-1zM681,367h1v1h-1zM681,414h1v1h-1zM681,416h1v1h-1zM681,417h1v1h-1zM681,418h1v1h-1zM681,420h1v1h-1zM681,467h1v1h-1zM681,517h1v1h-1zM681,567h1v1h-1zM681,617h1v1h-1zM681,665h1v1h-1zM681,667h1v1h-1zM683,417h1v1h-1zM685,417h1v1h-1zM687,417h1v1h-1zM689,417h1v1h-1zM691,417h1v1h-1zM693,417h1v1h-1zM695,417h1v1h-1zM697,417h1v1h-1zM699,417h1v1h-1zM701,167h1v1h-1zM701,169h1v1h-1zM701,217h1v1h-1zM701,267h1v1h-1zM701,317h1v1h-1zM701,367h1v1h-1zM701,414h1v1h-1zM701,416h1v1h-1zM701,417h1v1h-1zM701,418h1v1h-1zM701,420h1v1h-1zM701,467h1v1h-1zM701,517h1v1h-1zM701,567h1v1h-1zM701,617h1v1h-1zM701,665h1v1h-1zM701,667h1v1h-1zM703,417h1v1h-1zM705,417h1v1h-1zM707,417h1v1h-1zM709,417h1v1h-1zM711,417h1v1h-1zM713,417h1v1h-1zM715,417h1v1h-1zM717,417h1v1h-1zM719,417h1v1h-1zM721,168h1v1h-1zM721,170h1v1h-1zM721,172h1v1h-1zM721,177h1v1h-1zM721,187h1v1h-1zM721,197h1v1h-1zM721,207h1v1h-1zM721,217h1v1h-1zM721,227h1v1h-1zM721,237h1v1h-1zM721,247h1v1h-1zM721,257h1v1h-1zM721,267h1v1h-1zM721,277h1v1h-1zM721,287h1v1h-1zM721,297h1v1h-1zM721,307h1v1h-1zM721,317h1v1h-1zM721,327h1v1h-1zM721,337h1v1h-1zM721,347h1v1h-1zM721,357h1v1h-1zM721,367h1v1h-1zM721,377h1v1h-1zM721,387h1v1h-1zM721,397h1v1h-1zM721,407h1v1h-1zM721,414h1v1h-1zM721,416h1v1h-1zM721,417h1v1h-1zM721,418h1v1h-1zM721,420h1v1h-1zM721,427h1v1h-1zM721,437h1v1h-1zM721,447h1v1h-1zM721,457h1v1h-1zM721,467h1v1h-1zM721,477h1v1h-1zM721,487h1v1h-1zM721,497h1v1h-1zM721,507h1v1h-1zM721,517h1v1h-1zM721,527h1v1h-1zM721,537h1v1h-1zM721,547h1v1h-1zM721,557h1v1h-1zM721,567h1v1h-1zM721,577h1v1h-1zM721,587h1v1h-1zM721,597h1v1h-1zM721,607h1v1h-1zM721,617h1v1h-1zM721,627h1v1h-1zM721,637h1v1h-1zM721,647h1v1h-1zM721,657h1v1h-1zM721,662h1v1h-1zM721,664h1v1h-1zM721,666h1v1h-1zM723,417h1v1h-1zM725,417h1v1h-1zM727,417h1v1h-1zM729,417h1v1h-1zM731,417h1v1h-1zM733,417h1v1h-1zM735,417h1v1h-1zM737,417h1v1h-1zM739,417h1v1h-1zM741,167h1v1h-1zM741,169h1v1h-1zM741,217h1v1h-1zM741,267h1v1h-1zM741,317h1v1h-1zM741,367h1v1h-1zM741,414h1v1h-1zM741,416h1v1h-1zM741,417h1v1h-1zM741,418h1v1h-1zM741,420h1v1h-1zM741,467h1v1h-1zM741,517h1v1h-1zM741,567h1v1h-1zM741,617h1v1h-1zM741,665h1v1h-1zM741,667h1v1h-1zM743,417h1v1h-1zM745,417h1v1h-1zM747,417h1v1h-1zM749,417h1v1h-1zM751,417h1v1h-1zM753,417h1v1h-1zM755,417h1v1h-1zM757,417h1v1h-1zM759,417h1v1h-1zM761,167h1v1h-1zM761,169h1v1h-1zM761,217h1v1h-1zM761,267h1v1h-1zM761,317h1v1h-1zM761,367h1v1h-1zM761,414h1v1h-1zM761,416h1v1h-1zM761,417h1v1h-1zM761,418h1v1h-1zM761,420h1v1h-1zM761,467h1v1h-1zM761,517h1v1h-1zM761,567h1v1h-1zM761,617h1v1h-1zM761,665h1v1h-1zM761,667h1v1h-1zM763,417h1v1h-1zM765,417h1v1h-1zM767,417h1v1h-1zM769,417h1v1h-1zM771,417h1v1h-1zM773,417h1v1h-1zM775,417h1v1h-1zM777,417h1v1h-1zM779,417h1v1h-1zM781,167h1v1h-1zM781,169h1v1h-1zM781,217h1v1h-1zM781,267h1v1h-1zM781,317h1v1h-1zM781,367h1v1h-1zM781,414h1v1h-1zM781,416h1v1h-1zM781,417h1v1h-1zM781,418h1v1h-1zM781,420h1v1h-1zM781,467h1v1h-1zM781,517h1v1h-1zM781,567h1v1h-1zM781,617h1v1h-1zM781,665h1v1h-1zM781,667h1v1h-1zM783,417h1v1h-1zM785,417h1v1h-1zM787,417h1v1h-1zM789,417h1v1h-1zM791,417h1v1h-1zM793,417h1v1h-1zM795,417h1v1h-1zM797,417h1v1h-1zM799,417h1v1h-1zM801,167h1v1h-1zM801,169h1v1h-1zM801,217h1v1h-1zM801,267h1v1h-1zM801,317h1v1h-1zM801,367h1v1h-1zM801,414h1v1h-1zM801,416h1v1h-1zM801,417h1v1h-1zM801,418h1v1h-1zM801,420h1v1h-1zM801,467h1v1h-1zM801,517h1v1h-1zM801,567h1v1h-1zM801,617h1v1h-1zM801,665h1v1h-1zM801,667h1v1h-1zM803,417h1v1h-1zM805,417h1v1h-1zM807,417h1v1h-1zM809,417h1v1h-1zM811,417h1v1h-1zM813,417h1v1h-1zM815,417h1v1h-1zM817,417h1v1h-1zM819,417h1v1h-1zM821,168h1v1h-1zM821,170h1v1h-1zM821,172h1v1h-1zM821,177h1v1h-1zM821,187h1v1h-1zM821,197h1v1h-1zM821,207h1v1h-1zM821,217h1v1h-1zM821,227h1v1h-1zM821,237h1v1h-1zM821,247h1v1h-1zM821,257h1v1h-1zM821,267h1v1h-1zM821,277h1v1h-1zM821,287h1v1h-1zM821,297h1v1h-1zM821,307h1v1h-1zM821,317h1v1h-1zM821,327h1v1h-1zM821,337h1v1h-1zM821,347h1v1h-1zM821,357h1v1h-1zM821,367h1v1h-1zM821,377h1v1h-1zM821,387h1v1h-1zM821,397h1v1h-1zM821,407h1v1h-1zM821,414h1v1h-1zM821,416h1v1h-1zM821,417h1v1h-1zM821,418h1v1h-1zM821,420h1v1h-1zM821,427h1v1h-1zM821,437h1v1h-1zM821,447h1v1h-1zM821,457h1v1h-1zM821,467h1v1h-1zM821,477h1v1h-1zM821,487h1v1h-1zM821,497h1v1h-1zM821,507h1v1h-1zM821,517h1v1h-1zM821,527h1v1h-1zM821,537h1v1h-1zM821,547h1v1h-1zM821,557h1v1h-1zM821,567h1v1h-1zM821,577h1v1h-1zM821,587h1v1h-1zM821,597h1v1h-1zM821,607h1v1h-1zM821,617h1v1h-1zM821,627h1v1h-1zM821,637h1v1h-1zM821,647h1v1h-1zM821,657h1v1h-1zM821,662h1v1h-1zM821,664h1v1h-1zM821,666h1v1h-1zM823,417h1v1h-1zM825,417h1v1h-1zM827,417h1v1h-1zM829,417h1v1h-1zM831,417h1v1h-1zM833,417h1v1h-1zM835,417h1v1h-1zM837,417h1v1h-1zM839,417h1v1h-1zM841,167h1v1h-1zM841,169h1v1h-1zM841,217h1v1h-1zM841,267h1v1h-1zM841,317h1v1h-1zM841,367h1v1h-1zM841,414h1v1h-1zM841,416h1v1h-1zM841,417h1v1h-1zM841,418h1v1h-1zM841,420h1v1h-1zM841,467h1v1h-1zM841,517h1v1h-1zM841,567h1v1h-1zM841,617h1v1h-1zM841,665h1v1h-1zM841,667h1v1h-1zM843,417h1v1h-1zM845,417h1v1h-1zM847,417h1v1h-1zM849,417h1v1h-1zM851,417h1v1h-1zM853,417h1v1h-1zM855,417h1v1h-1zM857,417h1v1h-1zM859,417h1v1h-1zM861,167h1v1h-1zM861,169h1v1h-1zM861,217h1v1h-1zM861,267h1v1h-1zM861,317h1v1h-1zM861,367h1v1h-1zM861,414h1v1h-1zM861,416h1v1h-1zM861,417h1v1h-1zM861,418h1v1h-1zM861,420h1v1h-1zM861,467h1v1h-1zM861,517h1v1h-1zM861,567h1v1h-1zM861,617h1v1h-1zM861,665h1v1h-1zM861,667h1v1h-1zM863,417h1v1h-1zM865,417h1v1h-1zM867,417h1v1h-1zM869,417h1v1h-1zM871,417h1v1h-1zM873,417h1v1h-1zM875,417h1v1h-1zM877,417h1v1h-1zM879,417h1v1h-1zM881,167h1v1h-1zM881,169h1v1h-1zM881,217h1v1h-1zM881,267h1v1h-1zM881,317h1v1h-1zM881,367h1v1h-1zM881,414h1v1h-1zM881,416h1v1h-1zM881,417h1v1h-1zM881,418h1v1h-1zM881,420h1v1h-1zM881,467h1v1h-1zM881,517h1v1h-1zM881,567h1v1h-1zM881,617h1v1h-1zM881,665h1v1h-1zM881,667h1v1h-1zM883,417h1v1h-1zM885,417h1v1h-1zM887,417h1v1h-1zM889,417h1v1h-1zM891,417h1v1h-1zM893,417h1v1h-1zM895,417h1v1h-1zM897,417h1v1h-1zM899,417h1v1h-1zM901,167h1v1h-1zM901,169h1v1h-1zM901,217h1v1h-1zM901,267h1v1h-1zM901,317h1v1h-1zM901,367h1v1h-1zM901,414h1v1h-1zM901,416h1v1h-1zM901,417h1v1h-1zM901,418h1v1h-1zM901,420h1v1h-1zM901,467h1v1h-1zM901,517h1v1h-1zM901,567h1v1h-1zM901,617h1v1h-1zM901,665h1v1h-1zM901,667h1v1h-1zM903,417h1v1h-1zM905,417h1v1h-1zM907,417h1v1h-1zM909,417h1v1h-1zM911,417h1v1h-1zM913,417h1v1h-1zM915,417h1v1h-1zM917,417h1v1h-1zM919,417h1v1h-1zM921,168h1v1h-1zM921,170h1v1h-1zM921,172h1v1h-1zM921,177h1v1h-1zM921,187h1v1h-1zM921,197h1v1h-1zM921,207h1v1h-1zM921,217h1v1h-1zM921,227h1v1h-1zM921,237h1v1h-1zM921,247h1v1h-1zM921,257h1v1h-1zM921,267h1v1h-1zM921,277h1v1h-1zM921,287h1v1h-1zM921,297h1v1h-1zM921,307h1v1h-1zM921,317h1v1h-1zM921,327h1v1h-1zM921,337h1v1h-1zM921,347h1v1h-1zM921,357h1v1h-1zM921,367h1v1h-1zM921,377h1v1h-1zM921,387h1v1h-1zM921,397h1v1h-1zM921,407h1v1h-1zM921,414h1v1h-1zM921,416h1v1h-1zM921,417h1v1h-1zM921,418h1v1h-1zM921,420h1v1h-1zM921,427h1v1h-1zM921,437h1v1h-1zM921,447h1v1h-1zM921,457h1v1h-1zM921,467h1v1h-1zM921,477h1v1h-1zM921,487h1v1h-1zM921,497h1v1h-1zM921,507h1v1h-1zM921,517h1v1h-1zM921,527h1v1h-1zM921,537h1v1h-1zM921,547h1v1h-1zM921,557h1v1h-1zM921,567h1v1h-1zM921,577h1v1h-1zM921,587h1v1h-1zM921,597h1v1h-1zM921,607h1v1h-1zM921,617h1v1h-1zM921,627h1v1h-1zM921,637h1v1h-1zM921,647h1v1h-1zM921,657h1v1h-1zM921,662h1v1h-1zM921,664h1v1h-1zM921,666h1v1h-1zM923,417h1v1h-1zM925,417h1v1h-1zM927,417h1v1h-1zM929,417h1v1h-1zM931,417h1v1h-1zM933,417h1v1h-1zM935,417h1v1h-1zM937,417h1v1h-1zM939,417h1v1h-1zM941,167h1v1h-1zM941,169h1v1h-1zM941,217h1v1h-1zM941,267h1v1h-1zM941,317h1v1h-1zM941,367h1v1h-1zM941,414h1v1h-1zM941,416h1v1h-1zM941,417h1v1h-1zM941,418h1v1h-1zM941,420h1v1h-1zM941,467h1v1h-1zM941,517h1v1h-1zM941,567h1v1h-1zM941,617h1v1h-1zM941,665h1v1h-1zM941,667h1v1h-1zM943,417h1v1h-1zM945,417h1v1h-1zM947,417h1v1h-1zM949,417h1v1h-1zM951,417h1v1h-1zM953,417h1v1h-1zM955,417h1v1h-1zM957,417h1v1h-1zM959,417h1v1h-1zM961,167h1v1h-1zM961,169h1v1h-1zM961,217h1v1h-1zM961,267h1v1h-1zM961,317h1v1h-1zM961,367h1v1h-1zM961,414h1v1h-1zM961,416h1v1h-1zM961,417h1v1h-1zM961,418h1v1h-1zM961,420h1v1h-1zM961,467h1v1h-1zM961,517h1v1h-1zM961,567h1v1h-1zM961,617h1v1h-1zM961,665h1v1h-1zM961,667h1v1h-1zM963,417h1v1h-1zM965,417h1v1h-1zM967,417h1v1h-1zM969,417h1v1h-1zM971,417h1v1h-1zM973,417h1v1h-1zM975,417h1v1h-1zM977,417h1v1h-1zM979,417h1v1h-1zM981,167h1v1h-1zM981,169h1v1h-1zM981,217h1v1h-1zM981,267h1v1h-1zM981,317h1v1h-1zM981,367h1v1h-1zM981,414h1v1h-1zM981,416h1v1h-1zM981,417h1v1h-1zM981,418h1v1h-1zM981,420h1v1h-1zM981,467h1v1h-1zM981,517h1v1h-1zM981,567h1v1h-1zM981,617h1v1h-1zM981,665h1v1h-1zM981,667h1v1h-1zM983,417h1v1h-1zM985,417h1v1h-1zM987,417h1v1h-1zM989,417h1v1h-1zM991,417h1v1h-1zM993,417h1v1h-1zM995,417h1v1h-1zM997,417h1v1h-1zM999,417h1v1h-1zM1001,167h1v1h-1zM1001,169h1v1h-1zM1001,217h1v1h-1zM1001,267h1v1h-1zM1001,317h1v1h-1zM1001,367h1v1h-1zM1001,414h1v1h-1zM1001,416h1v1h-1zM1001,417h1v1h-1zM1001,418h1v1h-1zM1001,420h1v1h-1zM1001,467h1v1h-1zM1001,517h1v1h-1zM1001,567h1v1h-1zM1001,617h1v1h-1zM1001,665h1v1h-1zM1001,667h1v1h-1zM1003,417h1v1h-1zM1005,417h1v1h-1zM1007,417h1v1h-1zM1009,417h1v1h-1zM1011,417h1v1h-1zM1013,417h1v1h-1zM1015,217h1v1h-1zM1015,267h1v1h-1zM1015,317h1v1h-1zM1015,367h1v1h-1zM1015,417h1v1h-1zM1015,467h1v1h-1zM1015,517h1v1h-1zM1015,567h1v1h-1zM1015,617h1v1h-1zM1017,217h1v1h-1zM1017,267h1v1h-1zM1017,317h1v1h-1zM1017,367h1v1h-1zM1017,417h1v1h-1zM1017,467h1v1h-1zM1017,517h1v1h-1zM1017,567h1v1h-1zM1017,617h1v1h-1zM1018,177h1v1h-1zM1018,187h1v1h-1zM1018,197h1v1h-1zM1018,207h1v1h-1zM1018,227h1v1h-1zM1018,237h1v1h-1zM1018,247h1v1h-1zM1018,257h1v1h-1zM1018,277h1v1h-1zM1018,287h1v1h-1zM1018,297h1v1h-1zM1018,307h1v1h-1zM1018,327h1v1h-1zM1018,337h1v1h-1zM1018,347h1v1h-1zM1018,357h1v1h-1zM1018,377h1v1h-1zM1018,387h1v1h-1zM1018,397h1v1h-1zM1018,407h1v1h-1zM1018,427h1v1h-1zM1018,437h1v1h-1zM1018,447h1v1h-1zM1018,457h1v1h-1zM1018,477h1v1h-1zM1018,487h1v1h-1zM1018,497h1v1h-1zM1018,507h1v1h-1zM1018,527h1v1h-1zM1018,537h1v1h-1zM1018,547h1v1h-1zM1018,557h1v1h-1zM1018,577h1v1h-1zM1018,587h1v1h-1zM1018,597h1v1h-1zM1018,607h1v1h-1zM1018,627h1v1h-1zM1018,637h1v1h-1zM1018,647h1v1h-1zM1018,657h1v1h-1zM1019,217h1v1h-1zM1019,267h1v1h-1zM1019,317h1v1h-1zM1019,367h1v1h-1zM1019,417h1v1h-1zM1019,467h1v1h-1zM1019,517h1v1h-1zM1019,567h1v1h-1zM1019,617h1v1h-1zM1020,177h1v1h-1zM1020,187h1v1h-1zM1020,197h1v1h-1zM1020,207h1v1h-1zM1020,227h1v1h-1zM1020,237h1v1h-1zM1020,247h1v1h-1zM1020,257h1v1h-1zM1020,277h1v1h-1zM1020,287h1v1h-1zM1020,297h1v1h-1zM1020,307h1v1h-1zM1020,327h1v1h-1zM1020,337h1v1h-1zM1020,347h1v1h-1zM1020,357h1v1h-1zM1020,377h1v1h-1zM1020,387h1v1h-1zM1020,397h1v1h-1zM1020,407h1v1h-1zM1020,427h1v1h-1zM1020,437h1v1h-1zM1020,447h1v1h-1zM1020,457h1v1h-1zM1020,477h1v1h-1zM1020,487h1v1h-1zM1020,497h1v1h-1zM1020,507h1v1h-1zM1020,527h1v1h-1zM1020,537h1v1h-1zM1020,547h1v1h-1zM1020,557h1v1h-1zM1020,577h1v1h-1zM1020,587h1v1h-1zM1020,597h1v1h-1zM1020,607h1v1h-1zM1020,627h1v1h-1zM1020,637h1v1h-1zM1020,647h1v1h-1zM1020,657h1v1h-1z" fill="#000"/>
<path d="M21,180.5 L28,174 L37,174 L38,175 L38,186 L37,187 L28,187 Z" fill="#ff9900"/>
<rect x="27" y="175" width="10" height="2" fill="#fff"/>
<rect x="30.8" y="175" width="2.3" height="11" fill="#fff"/>
<polygon points="0.5,358.5 12.5,358.5 19.5,366.5 12.5,374.5 0.5,374.5" fill="#00a000" stroke="#3a7a3a" stroke-width="1"/>
<rect x="0" y="359" width="2" height="16" fill="#7cc47c"/>
<path d="M13,374 L19.3,367" stroke="#ffffff" stroke-width="0.8" fill="none"/>
<path d="M13.2,359.5 L18.5,365.5" stroke="#7fd07f" stroke-width="0.8" fill="none"/>
<text x="8" y="371.5" text-anchor="middle" font-family='"Liberation Sans", sans-serif' font-size="15.5" font-weight="bold" fill="#fff">4</text>
<polygon points="0.5,513.5 12.5,513.5 19.5,521.5 12.5,529.5 0.5,529.5" fill="#fff" stroke="#00dede" stroke-width="1.1"/>
<path d="M1.5,528 L1.5,514.5 L12,514.5" stroke="#404040" stroke-width="0.9" fill="none"/>
<text x="7.5" y="526.5" text-anchor="middle" font-family='"Liberation Sans", sans-serif' font-size="15.5" fill="#00dede" stroke="#00dede" stroke-width="0.35">2</text>
<polygon points="0.5,611.5 12.5,611.5 19.5,619.5 12.5,627.5 0.5,627.5" fill="#fff" stroke="#a000b0" stroke-width="1.1"/>
<path d="M1.5,626 L1.5,612.5 L12,612.5" stroke="#404040" stroke-width="0.9" fill="none"/>
<text x="7.5" y="624.5" text-anchor="middle" font-family='"Liberation Sans", sans-serif' font-size="15.5" fill="#a000b0" stroke="#a000b0" stroke-width="0.35">3</text>
<polygon points="1010,310.5 1016,305 1016,316" fill="#00a000"/>
<rect x="1015" y="310" width="6" height="1.5" fill="#00a000"/>
<rect x="20.5" y="670.5" width="554" height="20" rx="5" ry="5" fill="#fff" stroke="#000" stroke-width="1.05"/>
<rect x="582.8" y="670.5" width="146.70000000000005" height="37" rx="5" ry="5" fill="#fff" stroke="#000" stroke-width="1.05"/>
<rect x="737.5" y="670.5" width="107" height="37" rx="5" ry="5" fill="#fff" stroke="#000" stroke-width="1.05"/>
<rect x="851.5" y="670.5" width="170" height="37" rx="5" ry="5" fill="#fff" stroke="#000" stroke-width="1.05"/>
<rect x="165" y="673" width="25" height="15.5" rx="8" ry="7.75" fill="#00dde6"/>
<text x="177.5" y="685.6" text-anchor="middle" font-family='"Liberation Sans", sans-serif' font-size="14" font-weight="bold" fill="#000">2</text>
<text x="207.5" y="685.6" font-family='"Liberation Sans", sans-serif' font-size="14.5" font-weight="normal" fill="#00d8e0" stroke="#00d8e0" stroke-width="0.2" textLength="50" lengthAdjust="spacing" >20.0 V</text>
<rect x="304" y="673" width="25" height="15.5" rx="8" ry="7.75" fill="#a000b0"/>
<text x="316.5" y="685.6" text-anchor="middle" font-family='"Liberation Sans", sans-serif' font-size="14" font-weight="bold" fill="#000">3</text>
<text x="346.5" y="685.6" font-family='"Liberation Sans", sans-serif' font-size="14.5" font-weight="normal" fill="#a000b0" stroke="#a000b0" stroke-width="0.2" textLength="50" lengthAdjust="spacing" >5.00 V</text>
<rect x="443" y="673" width="25" height="15.5" rx="8" ry="7.75" fill="#00a000"/>
<text x="455.5" y="685.6" text-anchor="middle" font-family='"Liberation Sans", sans-serif' font-size="14" font-weight="bold" fill="#000">4</text>
<path d="M478.5,676 L478.5,685 M475,681.5 L478.5,685 L482,681.5" stroke="#00a000" stroke-width="1.5" fill="none"/>
<text x="485.5" y="685.6" font-family='"Liberation Sans", sans-serif' font-size="14.5" font-weight="normal" fill="#00a000" stroke="#00a000" stroke-width="0.3" textLength="54.5" lengthAdjust="spacing" >500mA</text>
<text x="587.5" y="685.8" font-family='"Liberation Sans", sans-serif' font-size="14.5" font-weight="normal" fill="#000" stroke="#000" stroke-width="0.2" textLength="71" lengthAdjust="spacing" >Z 10.0µs</text>
<rect x="587" y="691" width="12" height="13" rx="1.5" fill="#ff9900"/>
<rect x="588.5" y="692.5" width="9.5" height="2" fill="#fff"/>
<rect x="592" y="692.5" width="2.3" height="10.3" fill="#fff"/>
<path d="M600,697.5 L607.5,697.5 M605,694.5 L608.5,697.5 L605,700.5" stroke="#ff9900" stroke-width="1.5" fill="none"/>
<polygon points="610,694 621,694 615.5,700.5" fill="#ff9900"/>
<text x="621.8" y="702.8" font-family='"Liberation Sans", sans-serif' font-size="14.5" font-weight="normal" fill="#ff9900" stroke="#ff9900" stroke-width="0.15" textLength="84.5" lengthAdjust="spacing" >460.000µs</text>
<text x="744" y="685.8" font-family='"Liberation Sans", sans-serif' font-size="14.5" font-weight="normal" fill="#000" stroke="#000" stroke-width="0.2" textLength="69.5" lengthAdjust="spacing" >250MS/s</text>
<text x="744" y="702.8" font-family='"Liberation Sans", sans-serif' font-size="14.5" font-weight="normal" fill="#000" stroke="#000" stroke-width="0.2" textLength="79" lengthAdjust="spacing" >1M points</text>
<rect x="882" y="673" width="25" height="15.5" rx="8" ry="7.75" fill="#00a000"/>
<text x="894.5" y="685.6" text-anchor="middle" font-family='"Liberation Sans", sans-serif' font-size="14" font-weight="bold" fill="#000">4</text>
<path d="M920,685 L924.5,685 L927.5,676.5 L932,676.5" stroke="#000" stroke-width="2" fill="none"/>
<rect x="950" y="680.2" width="9.5" height="1.6" fill="#000"/>
<text x="961" y="685.8" font-family='"Liberation Sans", sans-serif' font-size="14.5" font-weight="normal" fill="#000" stroke="#000" stroke-width="0.2" textLength="55.5" lengthAdjust="spacing" >560mA</text>
</svg>
</body></html>
